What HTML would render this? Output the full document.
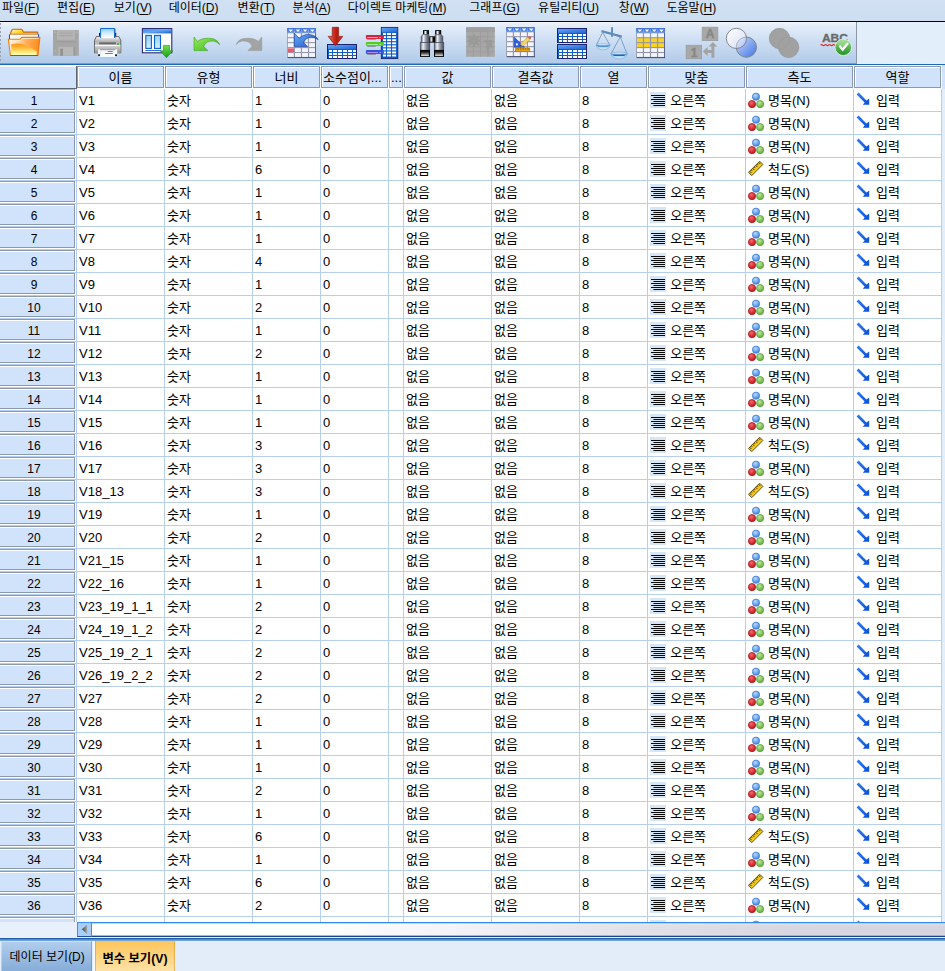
<!DOCTYPE html>
<html lang="ko"><head><meta charset="utf-8"><title>SPSS Variable View</title>
<style>
html,body{margin:0;padding:0}
html{width:945px;height:971px;overflow:hidden}
body{width:945px;height:971px;overflow:hidden;position:relative;background:#fff;font-family:"Liberation Sans","Noto Sans CJK KR",sans-serif;font-size:13px;color:#000}
#defs{position:absolute;width:0;height:0;overflow:hidden}
#menubar{position:absolute;left:0;top:0;width:945px;height:21px;background:linear-gradient(#d1e1f3,#cddef1)}
#menubar:after{content:"";position:absolute;left:0;top:21px;width:945px;height:1px;background:#000}
.mi{position:absolute;top:0;height:20px;line-height:17px;white-space:nowrap;font-size:12px}
.mi u{text-decoration:underline;text-underline-offset:2px}
#toolbar{position:absolute;left:0;top:22px;width:856px;height:41px;background:linear-gradient(#f6f9fe 0,#f6f9fe 1px,#e7effa 1.5px,#cbddf2 50%,#b2cbe9 100%);border-right:1px solid #8b97a6;border-bottom:1px solid #979797}
#grip{position:absolute;left:0;top:1.2px;width:1.4px;height:39px;background:repeating-linear-gradient(#98a2ae 0 1.6px,transparent 1.6px 4.05px)}
#tbright{position:absolute;left:857px;top:22px;width:88px;height:42px;background:#e3eefb}
#tbbot{position:absolute;left:0;top:63px;width:857px;height:1px;background:#979797}
#blueline{position:absolute;left:0;top:64px;width:945px;height:1px;background:#1d69b9}
#grid{position:absolute;left:0;top:0;width:945px;height:922px;overflow:hidden}
#lines{position:absolute;left:0;top:0}
.hc{position:absolute;top:67px;height:20px;line-height:21.2px;text-align:center;white-space:nowrap}
.hl{text-align:left;text-indent:1.5px}
.row{position:absolute;left:0;width:945px;height:23px;line-height:23px}
.rn{position:absolute;left:0;width:68px;text-align:center;top:0;line-height:26.6px;font-size:12px}
.c{position:absolute;top:0;white-space:nowrap;line-height:25px}
.ic{position:absolute;overflow:visible}
#hs{position:absolute;left:0;top:922px;width:945px;height:16px}
#hsleft{position:absolute;left:0;top:0;width:77px;height:16.2px;background:#e8f1fb}
#hstrack{position:absolute;left:92px;top:0;width:853px;height:12.8px;border-top:1.2px solid #2f8bf0;border-bottom:1.1px solid #1a4688;background:linear-gradient(rgba(255,255,255,.25),rgba(255,255,255,0) 30%,rgba(255,255,255,0) 80%,rgba(255,255,255,.2)),linear-gradient(90deg,#fff 0,#fff 26%,#f1f0f5 45%,#e3e2e9 62%,#d8d6e0 82%,#d6d4de 100%)}
#hstrack:before{content:"";position:absolute;left:0;top:0;width:100%;height:0.8px;background:#c9c2b8;opacity:.7}
#hstrack:after{content:"";position:absolute;left:0;bottom:0;width:100%;height:0.9px;background:#a9a29a;opacity:.8}
#hsbtn{position:absolute;left:77px;top:0;width:13.4px;height:12.8px;border:1.2px solid #3b8ff0;border-bottom:1.1px solid #1f4f9f;border-right-width:0.8px;background:#a9cef8}
#hsbtn svg{position:absolute;left:-1px;top:-1px}
#tabline{position:absolute;left:0;top:937px;width:945px;height:4.4px;background:linear-gradient(#e9f1fb 0,#e9f1fb 1.0px,#1d5cab 1.2px,#2263b2 2.3px,#6c9fd2 2.6px,#78a8d8 4.4px)}
#tabs{overflow:hidden;position:absolute;left:0;top:941.3px;width:945px;height:29.7px;background:#e3edfa}
#tab1{overflow:hidden;position:absolute;left:1.4px;top:0.2px;width:90.6px;height:30px;background:linear-gradient(#b2cfee,#86acd8);line-height:33.4px;text-align:center;white-space:nowrap;font-size:12px;text-indent:1px;box-shadow:inset 1px 1px 0 rgba(255,255,255,.35),inset -1px 0 0 rgba(90,125,175,.45)}
#tabgap{position:absolute;left:92.6px;top:0;width:2.3px;height:30px;background:#f4f8fd}
#tab2{overflow:hidden;position:absolute;left:95px;top:0.2px;width:80px;height:30px;background:linear-gradient(#fdc55a,#fee2a6);line-height:37.4px;text-align:center;white-space:nowrap;font-weight:bold;font-size:12.3px;box-shadow:inset 1px 0 0 rgba(214,150,40,.55),inset -1px 0 0 rgba(214,150,40,.55)}
</style></head>
<body>
<svg id="defs" width="0" height="0"><defs><linearGradient id="gHdr" x1="0" y1="0" x2="0" y2="1"><stop offset="0" stop-color="#2f66de"/><stop offset="1" stop-color="#5f98f0"/></linearGradient><linearGradient id="gHdr2" x1="0" y1="0" x2="1" y2="1"><stop offset="0" stop-color="#63a8f3"/><stop offset="1" stop-color="#1f62d6"/></linearGradient><linearGradient id="gFoldB" x1="0" y1="0" x2="0" y2="1"><stop offset="0" stop-color="#f6c21c"/><stop offset="1" stop-color="#fde98a"/></linearGradient><linearGradient id="gFoldF" x1="1" y1="0" x2="0.2" y2="1"><stop offset="0" stop-color="#fb8a0c"/><stop offset="0.45" stop-color="#fda52e"/><stop offset="1" stop-color="#ffe49a"/></linearGradient><linearGradient id="gFoldG" x1="0" y1="0" x2="0" y2="1"><stop offset="0" stop-color="#ffb03a"/><stop offset="0.7" stop-color="#ffd76a"/><stop offset="1" stop-color="#fff2b8"/></linearGradient><linearGradient id="gPap" x1="0" y1="0" x2="0" y2="1"><stop offset="0" stop-color="#5fb0f5"/><stop offset="1" stop-color="#f2faff"/></linearGradient><linearGradient id="gPrn" x1="0" y1="0" x2="0" y2="1"><stop offset="0" stop-color="#f4f4f4"/><stop offset="0.35" stop-color="#c9c9c9"/><stop offset="0.5" stop-color="#e6e6e6"/><stop offset="1" stop-color="#8e8e8e"/></linearGradient><linearGradient id="gCol" x1="0" y1="0" x2="0" y2="1"><stop offset="0" stop-color="#94cff4"/><stop offset="1" stop-color="#d6effc"/></linearGradient><linearGradient id="gGrn" x1="0" y1="0" x2="0" y2="1"><stop offset="0" stop-color="#6ee24a"/><stop offset="1" stop-color="#189a1c"/></linearGradient><linearGradient id="gUndo" x1="0" y1="0" x2="1" y2="1"><stop offset="0" stop-color="#9be85a"/><stop offset="1" stop-color="#3cb81e"/></linearGradient><linearGradient id="gBlueA" x1="0" y1="0" x2="1" y2="1"><stop offset="0" stop-color="#6ab0f6"/><stop offset="1" stop-color="#1a55cc"/></linearGradient><linearGradient id="gRed" x1="0" y1="0" x2="1" y2="0"><stop offset="0" stop-color="#ef6c5a"/><stop offset="0.45" stop-color="#c8281a"/><stop offset="0.58" stop-color="#b21c0e"/><stop offset="1" stop-color="#d23a2c"/></linearGradient><linearGradient id="gMetal" x1="0" y1="0" x2="1" y2="0"><stop offset="0" stop-color="#4f535f"/><stop offset="0.32" stop-color="#dfe2ea"/><stop offset="0.58" stop-color="#8f93a0"/><stop offset="1" stop-color="#3a3d48"/></linearGradient><linearGradient id="gLens" x1="0" y1="0" x2="0" y2="1"><stop offset="0" stop-color="#c9c9cf"/><stop offset="0.3" stop-color="#333"/><stop offset="1" stop-color="#000"/></linearGradient><linearGradient id="gC1" x1="0" y1="0" x2="1" y2="1"><stop offset="0" stop-color="#ffffff"/><stop offset="1" stop-color="#d6ddf6"/></linearGradient><linearGradient id="gC2" x1="0" y1="0" x2="1" y2="1"><stop offset="0" stop-color="#cfdcfa"/><stop offset="1" stop-color="#3f74e6"/></linearGradient><linearGradient id="gChk" x1="0" y1="0" x2="0" y2="1"><stop offset="0" stop-color="#8fd87a"/><stop offset="1" stop-color="#1f9222"/></linearGradient><linearGradient id="gPan" x1="0" y1="0" x2="0" y2="1"><stop offset="0" stop-color="#2c6fc4"/><stop offset="0.45" stop-color="#9fd2f2"/><stop offset="1" stop-color="#e4f3fc"/></linearGradient><radialGradient id="gBallB" cx="0.4" cy="0.3" r="0.7"><stop offset="0" stop-color="#b9dbfb"/><stop offset="1" stop-color="#3f86e0"/></radialGradient><radialGradient id="gBallR" cx="0.4" cy="0.3" r="0.7"><stop offset="0" stop-color="#f26a6a"/><stop offset="1" stop-color="#c4141c"/></radialGradient><radialGradient id="gBallG" cx="0.4" cy="0.3" r="0.7"><stop offset="0" stop-color="#bfe79a"/><stop offset="1" stop-color="#5fae3a"/></radialGradient><linearGradient id="gRole" x1="0" y1="0" x2="1" y2="1"><stop offset="0" stop-color="#2f7df0"/><stop offset="1" stop-color="#0a4fd8"/></linearGradient><linearGradient id="gHdr3" x1="0" y1="0" x2="1" y2="1"><stop offset="0" stop-color="#3a84e8"/><stop offset="0.45" stop-color="#62a8f4"/><stop offset="1" stop-color="#1c5cd2"/></linearGradient><linearGradient id="gFB2" x1="0" y1="0" x2="1" y2="0.4"><stop offset="0" stop-color="#fffdf0"/><stop offset="0.3" stop-color="#ffe45a"/><stop offset="0.55" stop-color="#ffcf08"/><stop offset="1" stop-color="#ffd93a"/></linearGradient><linearGradient id="gFU" x1="0" y1="0" x2="1" y2="0"><stop offset="0" stop-color="#fff6ea"/><stop offset="0.22" stop-color="#ffe2c0"/><stop offset="0.6" stop-color="#ffac52"/><stop offset="1" stop-color="#ff8a1c"/></linearGradient><linearGradient id="gFL" x1="0" y1="0" x2="0" y2="1"><stop offset="0" stop-color="#ff9418"/><stop offset="0.4" stop-color="#ffbc3a"/><stop offset="0.78" stop-color="#ffee84"/><stop offset="1" stop-color="#ffffb4"/></linearGradient><linearGradient id="gPp" x1="0" y1="0" x2="1" y2="1"><stop offset="0" stop-color="#ffffff"/><stop offset="0.5" stop-color="#eef9ff"/><stop offset="1" stop-color="#b4e4fa"/></linearGradient><linearGradient id="gPrT" x1="0" y1="0" x2="0" y2="1"><stop offset="0" stop-color="#f6f6f6"/><stop offset="0.3" stop-color="#b4b4b4"/><stop offset="0.75" stop-color="#dcdcdc"/><stop offset="1" stop-color="#f2f2f2"/></linearGradient><linearGradient id="gPrL" x1="0" y1="0" x2="0" y2="1"><stop offset="0" stop-color="#d2d2d2"/><stop offset="1" stop-color="#969696"/></linearGradient><linearGradient id="gPap2" x1="0" y1="0" x2="0" y2="1"><stop offset="0" stop-color="#8ccdf8"/><stop offset="0.5" stop-color="#d2edfd"/><stop offset="1" stop-color="#ffffff"/></linearGradient><linearGradient id="gOut" x1="0" y1="0" x2="0" y2="1"><stop offset="0" stop-color="#8a8f96"/><stop offset="0.18" stop-color="#eef4fa"/><stop offset="0.8" stop-color="#ffffff"/><stop offset="1" stop-color="#cfe6f8"/></linearGradient><linearGradient id="gCap" x1="0" y1="0" x2="0" y2="1"><stop offset="0" stop-color="#050505"/><stop offset="0.35" stop-color="#3a3a3a"/><stop offset="1" stop-color="#e2e2e2"/></linearGradient><linearGradient id="gEye" x1="0" y1="0" x2="1" y2="0"><stop offset="0" stop-color="#8a8a8a"/><stop offset="0.4" stop-color="#f4f4f4"/><stop offset="1" stop-color="#2a2a2a"/></linearGradient><linearGradient id="gMetal2" x1="0" y1="0" x2="1" y2="0"><stop offset="0" stop-color="#5d6370"/><stop offset="0.3" stop-color="#eef0f5"/><stop offset="0.62" stop-color="#8d95a6"/><stop offset="1" stop-color="#4a4f5e"/></linearGradient><clipPath id="cpVenn"><circle cx="746.4" cy="47.2" r="10.6"/></clipPath><g id="i-align"><rect x="0" y="0" width="16" height="16" fill="#d5e6f6"/><rect x="1.0" y="3" width="14.0" height="1" fill="#0a0a0a"/><rect x="3.4" y="5" width="11.6" height="1" fill="#0a0a0a"/><rect x="1.0" y="7" width="14.0" height="1" fill="#0a0a0a"/><rect x="3.4" y="9" width="11.6" height="1" fill="#0a0a0a"/><rect x="1.0" y="11" width="14.0" height="1" fill="#0a0a0a"/><rect x="3.4" y="13" width="11.6" height="1" fill="#0a0a0a"/></g><g id="i-nominal"><circle cx="8" cy="4.7" r="3.6" fill="url(#gBallB)" stroke="#3c7bd0" stroke-width="0.8"/><circle cx="4" cy="12.1" r="3.6" fill="url(#gBallR)" stroke="#b0141c" stroke-width="0.8"/><circle cx="12.1" cy="12.1" r="3.6" fill="url(#gBallG)" stroke="#5c9c3c" stroke-width="0.8"/></g><g id="i-scale"><g transform="translate(7.7,7.4) rotate(-45)"><rect x="-7.9" y="-2.3" width="15.8" height="4.6" fill="#f5c81c" stroke="#5a4810" stroke-width="0.9"/><rect x="-6.6" y="-2.3" width="0.7" height="2.6" fill="#4a3a08"/><rect x="-4.5" y="-2.3" width="0.7" height="1.7" fill="#4a3a08"/><rect x="-2.4" y="-2.3" width="0.7" height="2.6" fill="#4a3a08"/><rect x="-0.3" y="-2.3" width="0.7" height="1.7" fill="#4a3a08"/><rect x="1.8" y="-2.3" width="0.7" height="2.6" fill="#4a3a08"/><rect x="3.9" y="-2.3" width="0.7" height="1.7" fill="#4a3a08"/><rect x="6.0" y="-2.3" width="0.7" height="2.6" fill="#4a3a08"/></g></g><g id="i-role"><path d="M0.6 2.6 L2.6 0.6 L10.4 8.4 L13.2 6.4 L13.2 12.8 L6.8 12.8 L8.6 10.4z" fill="url(#gRole)"/></g></defs></svg>
<div id="menubar">
<div class="mi" style="left:1.9px">파일<span>(<u>F</u>)</span></div>
<div class="mi" style="left:56.9px">편집<span>(<u>E</u>)</span></div>
<div class="mi" style="left:113.8px">보기<span>(<u>V</u>)</span></div>
<div class="mi" style="left:168.7px">데이터<span>(<u>D</u>)</span></div>
<div class="mi" style="left:237.6px">변환<span>(<u>T</u>)</span></div>
<div class="mi" style="left:292.6px">분석<span>(<u>A</u>)</span></div>
<div class="mi" style="left:347.8px">다이렉트 마케팅<span>(<u>M</u>)</span></div>
<div class="mi" style="left:469.3px">그래프<span>(<u>G</u>)</span></div>
<div class="mi" style="left:538.1px">유틸리티<span>(<u>U</u>)</span></div>
<div class="mi" style="left:618.7px">창<span>(<u>W</u>)</span></div>
<div class="mi" style="left:666.4px">도움말<span>(<u>H</u>)</span></div>
</div>
<div id="toolbar"><div id="grip"></div><svg id="tbicons" width="857" height="42" viewBox="0 22 857 42"><g><path d="M10.6 34.4 L10.6 33 L12.2 29.6 Q12.4 29.2 13 29.2 H21.4 Q22 29.2 22.2 29.7 L23.4 32.1 H37.2 Q37.8 32.1 37.8 32.7 V34.4z" fill="url(#gFB2)" stroke="#c46414" stroke-width="1.1" stroke-linejoin="round"/><path d="M9.5 39.6 V34.6 H38.6 V39.6z" fill="url(#gPp)"/><path d="M9.5 39.8 V34.2 M38.5 34.2 V38" fill="none" stroke="#1a5ad8" stroke-width="1.1"/><path d="M8.4 39.3 H20 L21.6 37.4 H39.9 L37.9 55.5 H10.4z" fill="url(#gFU)" stroke="#f07a08" stroke-width="1.1" stroke-linejoin="round"/><path d="M11 44.6 Q17.4 42.4 23.6 44.6 Q31.6 47.4 36.9 51.6 L36.5 54.9 H12z" fill="url(#gFL)"/><path d="M9.6 40.4 H20.4 L22 38.5 H38.6" fill="none" stroke="#fff3cf" stroke-width="0.8" opacity="0.9"/><path d="M10.5 55.5 H37.8" stroke="#a04a04" stroke-width="1" opacity="0.85"/></g><g><rect x="53" y="30.1" width="25.8" height="25.7" fill="#a6a6a6"/><rect x="57" y="30.1" width="18" height="9.8" fill="#b4b4b4"/><rect x="59.5" y="32.6" width="13" height="0.9" fill="#a2a2a2"/><rect x="59.5" y="35.3" width="13" height="0.9" fill="#a2a2a2"/><rect x="56.6" y="41.2" width="18.8" height="1.1" fill="#9b9b9b"/><rect x="58.4" y="46.8" width="15.2" height="9" fill="#b7b7b7"/><rect x="60.2" y="48.6" width="2.8" height="7.2" fill="#929292"/><rect x="73.6" y="46.8" width="1.6" height="9" fill="#999"/><rect x="54.4" y="31.6" width="1.2" height="1.2" fill="#bcbcbc"/><rect x="76.2" y="31.6" width="1.2" height="1.2" fill="#bcbcbc"/><rect x="54.4" y="50.2" width="1.2" height="1.2" fill="#bcbcbc"/></g><g><rect x="99" y="32.9" width="1.2" height="3" fill="#111"/><rect x="115" y="32.9" width="1.2" height="3" fill="#111"/><path d="M94.5 52.8 V40.4 L96.4 36.5 H118.8 L120.8 40.4 V52.8z" fill="url(#gPrT)" stroke="#4a4a4a" stroke-width="0.8" stroke-linejoin="round"/><rect x="94.9" y="46" width="25.5" height="6.7" fill="url(#gPrL)"/><rect x="94.9" y="45" width="25.5" height="1" fill="#fbfbfb"/><rect x="99.2" y="42.2" width="16.8" height="2.1" fill="#6a6a6a"/><rect x="99.2" y="42.2" width="16.8" height="0.7" fill="#8a8a8a"/><rect x="117" y="43" width="2.1" height="2" fill="#43c63e"/><path d="M100.6 38 V28.5 H114.7 V38z" fill="url(#gPap2)"/><path d="M100.6 38 V28.5 H114.7 V38" fill="none" stroke="#0f6bd8" stroke-width="1"/><rect x="114.4" y="29" width="0.9" height="9" fill="#0a58c0"/><rect x="98" y="49.4" width="2.2" height="5.2" fill="#f8f8f8"/><rect x="115" y="49.4" width="2.2" height="5.2" fill="#f8f8f8"/><rect x="98.1" y="54.4" width="1.9" height="1.5" fill="#0c0c0c"/><rect x="115.1" y="54.4" width="1.9" height="1.5" fill="#0c0c0c"/><path d="M100.2 49.2 H115 V57.8 H100.2z" fill="url(#gOut)"/><path d="M100.2 57.8 H115" stroke="#7fb6e6" stroke-width="0.7"/><rect x="107.8" y="51" width="5" height="0.9" fill="#6e747c"/><rect x="105.1" y="53" width="7.7" height="0.9" fill="#6e747c"/></g><g><rect x="142.4" y="28.6" width="29.4" height="24.2" fill="#fff" stroke="#1f2168" stroke-width="1.05"/><rect x="142.9" y="29.1" width="28.4" height="4.3" fill="url(#gHdr3)"/><rect x="145.8" y="35.4" width="5.6" height="13" fill="url(#gCol)" stroke="#0c62d8" stroke-width="1.1"/><rect x="154.5" y="35.4" width="6" height="13" fill="url(#gCol)" stroke="#0c62d8" stroke-width="1.1"/><rect x="145.3" y="50" width="15.6" height="0.9" fill="#1763d6"/><path d="M163.4 45.4 H169.6 V50.8 H172.8 L166.5 57.8 L160.2 50.8 H163.4z" fill="url(#gGrn)" stroke="#1c8a1c" stroke-width="0.6"/></g><g transform="translate(194.00,37)"><path d="M0 0 L0 13.6 L13.9 13.6 L9.7 9.5 Q10.6 6.4 13.4 5 Q16.4 3.7 19.6 4.1 Q23 4.8 25.8 7.6 Q23.6 3 19.4 1.8 Q14.6 0.8 10 1.5 Q6 2.4 3.4 4.4z" fill="url(#gUndo)" stroke="#37a51e" stroke-width="0.6"/></g><g transform="translate(261.80,37) scale(-1,1)"><path d="M0 0 L0 13.6 L13.9 13.6 L9.7 9.5 Q10.6 6.4 13.4 5 Q16.4 3.7 19.6 4.1 Q23 4.8 25.8 7.6 Q23.6 3 19.4 1.8 Q14.6 0.8 10 1.5 Q6 2.4 3.4 4.4z" fill="#a3a3a3" stroke="#9c9c9c" stroke-width="0.6"/></g><g><rect x="287.10" y="28.20" width="28.90" height="29.50" fill="#969aac"/><rect x="287.10" y="28.20" width="28.90" height="4.40" fill="url(#gHdr)"/><path d="M288.41 29.60 h4.6 l-2.3 2.5z" fill="#fff"/><path d="M295.64 29.60 h4.6 l-2.3 2.5z" fill="#fff"/><rect x="294.03" y="29.20" width="0.6" height="3.40" fill="#9cc0f6" opacity="0.8"/><path d="M302.86 29.60 h4.6 l-2.3 2.5z" fill="#fff"/><rect x="301.25" y="29.20" width="0.6" height="3.40" fill="#9cc0f6" opacity="0.8"/><path d="M310.09 29.60 h4.6 l-2.3 2.5z" fill="#fff"/><rect x="308.47" y="29.20" width="0.6" height="3.40" fill="#9cc0f6" opacity="0.8"/><rect x="287.90" y="33.30" width="5.87" height="3.84" fill="#f4f5fc"/><rect x="294.98" y="33.30" width="5.87" height="3.84" fill="#f4f5fc"/><rect x="302.05" y="33.30" width="5.87" height="3.84" fill="#f4f5fc"/><rect x="309.12" y="33.30" width="5.87" height="3.84" fill="#f4f5fc"/><rect x="287.90" y="38.24" width="5.87" height="3.84" fill="#f4f5fc"/><rect x="294.98" y="38.24" width="5.87" height="3.84" fill="#f4f5fc"/><rect x="302.05" y="38.24" width="5.87" height="3.84" fill="#f4f5fc"/><rect x="309.12" y="38.24" width="5.87" height="3.84" fill="#f4f5fc"/><rect x="287.90" y="43.18" width="5.87" height="3.84" fill="#f4f5fc"/><rect x="294.98" y="43.18" width="5.87" height="3.84" fill="#f4f5fc"/><rect x="302.05" y="43.18" width="5.87" height="3.84" fill="#f4f5fc"/><rect x="309.12" y="43.18" width="5.87" height="3.84" fill="#f4f5fc"/><rect x="287.90" y="48.12" width="5.87" height="3.84" fill="#f4f5fc"/><rect x="294.98" y="48.12" width="5.87" height="3.84" fill="#f4f5fc"/><rect x="302.05" y="48.12" width="5.87" height="3.84" fill="#f4f5fc"/><rect x="309.12" y="48.12" width="5.87" height="3.84" fill="#f4f5fc"/><rect x="287.90" y="53.06" width="5.87" height="3.84" fill="#f4f5fc"/><rect x="294.98" y="53.06" width="5.87" height="3.84" fill="#f4f5fc"/><rect x="302.05" y="53.06" width="5.87" height="3.84" fill="#f4f5fc"/><rect x="309.12" y="53.06" width="5.87" height="3.84" fill="#f4f5fc"/><rect x="315.10" y="32.60" width="0.9" height="25.50" fill="#56608a"/><rect x="287.70" y="57.20" width="28.30" height="0.9" fill="#3a4468"/><rect x="288" y="48.4" width="5.9" height="3.8" fill="#f0566a"/><g transform="translate(294.3,33.4) scale(0.96,0.97)"><path d="M0 0 L0 13.6 L13.9 13.6 L9.6 9.6 Q12.4 3.8 17.6 3.8 Q22 4 24.8 6.4 Q22.4 1.8 15.4 1.2 Q9 0.9 5.2 5z" fill="url(#gBlueA)" stroke="#1a3a9c" stroke-width="0.7"/></g></g><g><g shape-rendering="crispEdges"><rect x="327" y="44" width="30" height="15" fill="#1c2270"/><rect x="328" y="45" width="28" height="13" fill="#0f5ec8"/><rect x="328" y="45" width="28" height="4" fill="url(#gHdr2)"/><rect x="329" y="50" width="3" height="2" fill="#fff"/><rect x="333" y="50" width="4" height="2" fill="#fff"/><rect x="338" y="50" width="4" height="2" fill="#fff"/><rect x="343" y="50" width="4" height="2" fill="#fff"/><rect x="348" y="50" width="4" height="2" fill="#fff"/><rect x="353" y="50" width="3" height="2" fill="#fff"/><rect x="329" y="53" width="3" height="2" fill="#fff"/><rect x="333" y="53" width="4" height="2" fill="#fff"/><rect x="338" y="53" width="4" height="2" fill="#fff"/><rect x="343" y="53" width="4" height="2" fill="#fff"/><rect x="348" y="53" width="4" height="2" fill="#fff"/><rect x="353" y="53" width="3" height="2" fill="#fff"/><rect x="329" y="56" width="3" height="2" fill="#fff"/><rect x="333" y="56" width="4" height="2" fill="#fff"/><rect x="338" y="56" width="4" height="2" fill="#fff"/><rect x="343" y="56" width="4" height="2" fill="#fff"/><rect x="348" y="56" width="4" height="2" fill="#fff"/><rect x="353" y="56" width="3" height="2" fill="#fff"/></g><path d="M332.3 27.3 H338.6 V36.4 H342.8 L335.5 45.8 L328.2 36.4 H332.3z" fill="url(#gRed)" stroke="#8a1a10" stroke-width="0.7"/></g><g><rect x="381.30" y="27.40" width="16.50" height="31.20" fill="#0f5ec8" stroke="#1c2270" stroke-width="0.9"/><rect x="381.80" y="27.90" width="15.50" height="4.5" fill="url(#gHdr2)"/><rect x="383.00" y="33.10" width="3.00" height="1.9" fill="#fff"/><rect x="387.00" y="33.10" width="4.00" height="1.9" fill="#fff"/><rect x="392.10" y="33.10" width="4.00" height="1.9" fill="#fff"/><rect x="383.00" y="36.17" width="3.00" height="1.9" fill="#fff"/><rect x="387.00" y="36.17" width="4.00" height="1.9" fill="#fff"/><rect x="392.10" y="36.17" width="4.00" height="1.9" fill="#fff"/><rect x="383.00" y="39.24" width="3.00" height="1.9" fill="#fff"/><rect x="387.00" y="39.24" width="4.00" height="1.9" fill="#fff"/><rect x="392.10" y="39.24" width="4.00" height="1.9" fill="#fff"/><rect x="383.00" y="42.31" width="3.00" height="1.9" fill="#fff"/><rect x="387.00" y="42.31" width="4.00" height="1.9" fill="#fff"/><rect x="392.10" y="42.31" width="4.00" height="1.9" fill="#fff"/><rect x="383.00" y="45.38" width="3.00" height="1.9" fill="#fff"/><rect x="387.00" y="45.38" width="4.00" height="1.9" fill="#fff"/><rect x="392.10" y="45.38" width="4.00" height="1.9" fill="#fff"/><rect x="383.00" y="48.45" width="3.00" height="1.9" fill="#fff"/><rect x="387.00" y="48.45" width="4.00" height="1.9" fill="#fff"/><rect x="392.10" y="48.45" width="4.00" height="1.9" fill="#fff"/><rect x="383.00" y="51.52" width="3.00" height="1.9" fill="#fff"/><rect x="387.00" y="51.52" width="4.00" height="1.9" fill="#fff"/><rect x="392.10" y="51.52" width="4.00" height="1.9" fill="#fff"/><rect x="383.00" y="54.59" width="3.00" height="1.9" fill="#fff"/><rect x="387.00" y="54.59" width="4.00" height="1.9" fill="#fff"/><rect x="392.10" y="54.59" width="4.00" height="1.9" fill="#fff"/><rect x="367.2" y="38.85" width="8.6" height="0.7" fill="#3a3a3a" opacity="0.75"/><rect x="365.9" y="35.10" width="18" height="3.8" rx="0.8" fill="#d8203e"/><rect x="367.2" y="37.10" width="10.8" height="0.95" fill="#ffc48a"/><rect x="379.2" y="37.10" width="1.8" height="0.95" fill="#ffc48a"/><rect x="367.2" y="45.85" width="8.6" height="0.7" fill="#3a3a3a" opacity="0.75"/><rect x="365.9" y="42.10" width="18" height="3.8" rx="0.8" fill="#58c828"/><rect x="367.2" y="44.10" width="10.8" height="0.95" fill="#a6f2a0"/><rect x="379.2" y="44.10" width="1.8" height="0.95" fill="#a6f2a0"/><rect x="367.2" y="53.85" width="8.6" height="0.7" fill="#3a3a3a" opacity="0.75"/><rect x="365.9" y="50.10" width="18" height="3.8" rx="0.8" fill="#2f56d8"/><rect x="367.2" y="52.10" width="10.8" height="0.95" fill="#c48cff"/><rect x="379.2" y="52.10" width="1.8" height="0.95" fill="#c48cff"/></g><g><rect x="423.00" y="30.1" width="6.00" height="4.2" fill="#0c0c0c"/><rect x="424.10" y="31" width="3.40" height="3.3" fill="url(#gEye)"/><path d="M421.20 36.4 L422.70 34.6 H428.90 V42.5 H421.20z" fill="url(#gMetal2)" stroke="#3c404e" stroke-width="0.6"/><rect x="420.20" y="42.6" width="9.60" height="7.6" fill="url(#gMetal2)" stroke="#3c404e" stroke-width="0.6"/><rect x="420.00" y="50" width="10.00" height="6.9" fill="#050505"/><rect x="421.10" y="51" width="7.80" height="5" fill="url(#gCap)"/><rect x="435.10" y="30.1" width="6.10" height="4.2" fill="#0c0c0c"/><rect x="436.20" y="31" width="3.50" height="3.3" fill="url(#gEye)"/><path d="M435.10 34.6 H441.30 L442.80 36.4 V42.5 H435.10z" fill="url(#gMetal2)" stroke="#3c404e" stroke-width="0.6"/><rect x="434.20" y="42.6" width="9.60" height="7.6" fill="url(#gMetal2)" stroke="#3c404e" stroke-width="0.6"/><rect x="434.00" y="50" width="10.00" height="6.9" fill="#050505"/><rect x="435.10" y="51" width="7.80" height="5" fill="url(#gCap)"/><rect x="429.2" y="36.3" width="5.9" height="6.3" fill="#0a0a0a"/><rect x="430.1" y="37.1" width="3" height="4.6" fill="url(#gEye)"/></g><g><rect x="466.1" y="27.2" width="28.7" height="29.6" fill="#a7a7a7"/><rect x="472.87" y="31.6" width="0.9" height="25.2" fill="#9d9d9d"/><rect x="480.04" y="31.6" width="0.9" height="25.2" fill="#9d9d9d"/><rect x="487.21" y="31.6" width="0.9" height="25.2" fill="#9d9d9d"/><rect x="466.1" y="31.20" width="28.7" height="0.9" fill="#9d9d9d"/><rect x="466.1" y="36.24" width="28.7" height="0.9" fill="#9d9d9d"/><rect x="466.1" y="41.28" width="28.7" height="0.9" fill="#9d9d9d"/><rect x="466.1" y="46.32" width="28.7" height="0.9" fill="#9d9d9d"/><rect x="466.1" y="51.36" width="28.7" height="0.9" fill="#9d9d9d"/><rect x="466.1" y="27.2" width="28.7" height="4.2" fill="#a0a0a0"/><path d="M469 36.5 L479 45 M479 36.5 L469 45 M474 34.5 V47 M468 40.8 H480" stroke="#9a9a9a" stroke-width="2.6" fill="none"/><path d="M483.5 40 H492 V48.5 L489.6 46.4 Q488 51 489.4 56.6 Q485.4 51 486.6 44 z" fill="#9a9a9a"/></g><g><rect x="506.20" y="27.20" width="28.60" height="29.60" fill="#9296a6"/><rect x="506.20" y="27.20" width="28.60" height="4.40" fill="url(#gHdr)"/><path d="M507.47 28.60 h4.6 l-2.3 2.5z" fill="#fff"/><path d="M514.62 28.60 h4.6 l-2.3 2.5z" fill="#fff"/><rect x="513.05" y="28.20" width="0.6" height="3.40" fill="#9cc0f6" opacity="0.8"/><path d="M521.77 28.60 h4.6 l-2.3 2.5z" fill="#fff"/><rect x="520.20" y="28.20" width="0.6" height="3.40" fill="#9cc0f6" opacity="0.8"/><path d="M528.92 28.60 h4.6 l-2.3 2.5z" fill="#fff"/><rect x="527.35" y="28.20" width="0.6" height="3.40" fill="#9cc0f6" opacity="0.8"/><rect x="507.00" y="32.30" width="5.80" height="3.86" fill="#f4f5fc"/><rect x="514.00" y="32.30" width="5.80" height="3.86" fill="#f4f5fc"/><rect x="521.00" y="32.30" width="5.80" height="3.86" fill="#f4f5fc"/><rect x="528.00" y="32.30" width="5.80" height="3.86" fill="#f4f5fc"/><rect x="507.00" y="37.26" width="5.80" height="3.86" fill="#f4f5fc"/><rect x="514.00" y="37.26" width="5.80" height="3.86" fill="#f4f5fc"/><rect x="521.00" y="37.26" width="5.80" height="3.86" fill="#f4f5fc"/><rect x="528.00" y="37.26" width="5.80" height="3.86" fill="#f4f5fc"/><rect x="507.00" y="42.22" width="5.80" height="3.86" fill="#f4f5fc"/><rect x="514.00" y="42.22" width="5.80" height="3.86" fill="#f4f5fc"/><rect x="521.00" y="42.22" width="5.80" height="3.86" fill="#f4f5fc"/><rect x="528.00" y="42.22" width="5.80" height="3.86" fill="#f4f5fc"/><rect x="507.00" y="47.18" width="5.80" height="3.86" fill="#f4f5fc"/><rect x="514.00" y="47.18" width="5.80" height="3.86" fill="#f4f5fc"/><rect x="521.00" y="47.18" width="5.80" height="3.86" fill="#f4f5fc"/><rect x="528.00" y="47.18" width="5.80" height="3.86" fill="#f4f5fc"/><rect x="507.00" y="52.14" width="5.80" height="3.86" fill="#f4f5fc"/><rect x="514.00" y="52.14" width="5.80" height="3.86" fill="#f4f5fc"/><rect x="521.00" y="52.14" width="5.80" height="3.86" fill="#f4f5fc"/><rect x="528.00" y="52.14" width="5.80" height="3.86" fill="#f4f5fc"/><rect x="533.90" y="31.60" width="0.9" height="25.60" fill="#56608a"/><rect x="506.80" y="56.30" width="28.00" height="0.9" fill="#3a4468"/><path d="M514.2 37 V47.3 H524.6z" fill="#2d5ee2" stroke="#1b3fb0" stroke-width="0.6"/><circle cx="516.9" cy="44.4" r="1.1" fill="#fff"/><path d="M520.2 46.3 L521 43.4 L527.6 37.2 L530 39.6 L523.4 45.8z" fill="#f2d565" stroke="#a88a30" stroke-width="0.5"/><path d="M527.6 37.2 L528.8 36.2 Q530 35.6 531 36.8 Q531.8 38 530.9 38.8 L530 39.6z" fill="#d4675a"/><path d="M520.2 46.3 L520.6 44.8 L521.8 45.9z" fill="#111"/><rect x="515.3" y="48" width="14.5" height="3.7" fill="#e6a41e" stroke="#a9740c" stroke-width="0.6"/><rect x="516.60" y="48.3" width="0.6" height="1.6" fill="#8a5c08"/><rect x="518.30" y="48.3" width="0.6" height="1.6" fill="#8a5c08"/><rect x="520.00" y="48.3" width="0.6" height="1.6" fill="#8a5c08"/><rect x="521.70" y="48.3" width="0.6" height="1.6" fill="#8a5c08"/><rect x="523.40" y="48.3" width="0.6" height="1.6" fill="#8a5c08"/><rect x="525.10" y="48.3" width="0.6" height="1.6" fill="#8a5c08"/><rect x="526.80" y="48.3" width="0.6" height="1.6" fill="#8a5c08"/><rect x="528.50" y="48.3" width="0.6" height="1.6" fill="#8a5c08"/></g><g><g shape-rendering="crispEdges"><rect x="557" y="28" width="30" height="15" fill="#1c2270"/><rect x="558" y="29" width="28" height="13" fill="#0f5ec8"/><rect x="558" y="29" width="28" height="4" fill="url(#gHdr2)"/><rect x="559" y="34" width="3" height="2" fill="#fff"/><rect x="563" y="34" width="4" height="2" fill="#fff"/><rect x="568" y="34" width="4" height="2" fill="#fff"/><rect x="573" y="34" width="4" height="2" fill="#fff"/><rect x="578" y="34" width="4" height="2" fill="#fff"/><rect x="583" y="34" width="3" height="2" fill="#fff"/><rect x="559" y="37" width="3" height="2" fill="#fff"/><rect x="563" y="37" width="4" height="2" fill="#fff"/><rect x="568" y="37" width="4" height="2" fill="#fff"/><rect x="573" y="37" width="4" height="2" fill="#fff"/><rect x="578" y="37" width="4" height="2" fill="#fff"/><rect x="583" y="37" width="3" height="2" fill="#fff"/><rect x="559" y="40" width="3" height="2" fill="#fff"/><rect x="563" y="40" width="4" height="2" fill="#fff"/><rect x="568" y="40" width="4" height="2" fill="#fff"/><rect x="573" y="40" width="4" height="2" fill="#fff"/><rect x="578" y="40" width="4" height="2" fill="#fff"/><rect x="583" y="40" width="3" height="2" fill="#fff"/></g><g shape-rendering="crispEdges"><rect x="557" y="44" width="30" height="15" fill="#1c2270"/><rect x="558" y="45" width="28" height="13" fill="#0f5ec8"/><rect x="558" y="45" width="28" height="4" fill="url(#gHdr2)"/><rect x="559" y="50" width="3" height="2" fill="#fff"/><rect x="563" y="50" width="4" height="2" fill="#fff"/><rect x="568" y="50" width="4" height="2" fill="#fff"/><rect x="573" y="50" width="4" height="2" fill="#fff"/><rect x="578" y="50" width="4" height="2" fill="#fff"/><rect x="583" y="50" width="3" height="2" fill="#fff"/><rect x="559" y="53" width="3" height="2" fill="#fff"/><rect x="563" y="53" width="4" height="2" fill="#fff"/><rect x="568" y="53" width="4" height="2" fill="#fff"/><rect x="573" y="53" width="4" height="2" fill="#fff"/><rect x="578" y="53" width="4" height="2" fill="#fff"/><rect x="583" y="53" width="3" height="2" fill="#fff"/><rect x="559" y="56" width="3" height="2" fill="#fff"/><rect x="563" y="56" width="4" height="2" fill="#fff"/><rect x="568" y="56" width="4" height="2" fill="#fff"/><rect x="573" y="56" width="4" height="2" fill="#fff"/><rect x="578" y="56" width="4" height="2" fill="#fff"/><rect x="583" y="56" width="3" height="2" fill="#fff"/></g></g><g><path d="M596.6 44.6 L602.6 32.4 L609.6 44.6" fill="none" stroke="#5d86b4" stroke-width="0.7"/><path d="M611.4 53.2 L620.2 36.8 L626.8 53.2" fill="none" stroke="#5d86b4" stroke-width="0.7"/><path d="M601.6 30 L622 35.6 L621.6 37.8 L601.2 32.2z" fill="#5f8cba"/><rect x="611.1" y="27.2" width="1.9" height="9.6" fill="#5f8cba"/><path d="M596 44.6 H610.2 Q609.6 49.8 603.1 49.8 Q596.6 49.8 596 44.6z" fill="url(#gPan)" stroke="#6a9ccc" stroke-width="0.5"/><path d="M610.8 53.2 H627.4 Q626.6 58.8 619.1 58.8 Q611.6 58.8 610.8 53.2z" fill="url(#gPan)" stroke="#6a9ccc" stroke-width="0.5"/><rect x="613.4" y="54.6" width="11.4" height="1.2" rx="0.6" fill="#123f9a"/><rect x="598" y="45.5" width="10.2" height="1" rx="0.5" fill="#2667bd"/><ellipse cx="603.1" cy="44.6" rx="7" ry="0.9" fill="#cfe8f8" stroke="#6a9ccc" stroke-width="0.4"/><ellipse cx="619.1" cy="53.2" rx="8.2" ry="1" fill="#cfe8f8" stroke="#6a9ccc" stroke-width="0.4"/></g><g><rect x="636.20" y="28.20" width="28.80" height="29.50" fill="#9296a6"/><rect x="636.20" y="28.20" width="28.80" height="4.40" fill="url(#gHdr)"/><path d="M637.50 29.60 h4.6 l-2.3 2.5z" fill="#fff"/><path d="M644.70 29.60 h4.6 l-2.3 2.5z" fill="#fff"/><rect x="643.10" y="29.20" width="0.6" height="3.40" fill="#9cc0f6" opacity="0.8"/><path d="M651.90 29.60 h4.6 l-2.3 2.5z" fill="#fff"/><rect x="650.30" y="29.20" width="0.6" height="3.40" fill="#9cc0f6" opacity="0.8"/><path d="M659.10 29.60 h4.6 l-2.3 2.5z" fill="#fff"/><rect x="657.50" y="29.20" width="0.6" height="3.40" fill="#9cc0f6" opacity="0.8"/><rect x="637.00" y="33.30" width="5.85" height="3.84" fill="#f4f5fc"/><rect x="644.05" y="33.30" width="5.85" height="3.84" fill="#f4f5fc"/><rect x="651.10" y="33.30" width="5.85" height="3.84" fill="#f4f5fc"/><rect x="658.15" y="33.30" width="5.85" height="3.84" fill="#f4f5fc"/><rect x="637.00" y="38.24" width="5.85" height="3.84" fill="#f9d324"/><rect x="644.05" y="38.24" width="5.85" height="3.84" fill="#f9d324"/><rect x="651.10" y="38.24" width="5.85" height="3.84" fill="#f9d324"/><rect x="658.15" y="38.24" width="5.85" height="3.84" fill="#f9d324"/><rect x="637.00" y="43.18" width="5.85" height="3.84" fill="#f9d324"/><rect x="644.05" y="43.18" width="5.85" height="3.84" fill="#f9d324"/><rect x="651.10" y="43.18" width="5.85" height="3.84" fill="#f9d324"/><rect x="658.15" y="43.18" width="5.85" height="3.84" fill="#f9d324"/><rect x="637.00" y="48.12" width="5.85" height="3.84" fill="#f4f5fc"/><rect x="644.05" y="48.12" width="5.85" height="3.84" fill="#f4f5fc"/><rect x="651.10" y="48.12" width="5.85" height="3.84" fill="#f4f5fc"/><rect x="658.15" y="48.12" width="5.85" height="3.84" fill="#f4f5fc"/><rect x="637.00" y="53.06" width="5.85" height="3.84" fill="#f4f5fc"/><rect x="644.05" y="53.06" width="5.85" height="3.84" fill="#f4f5fc"/><rect x="651.10" y="53.06" width="5.85" height="3.84" fill="#f4f5fc"/><rect x="658.15" y="53.06" width="5.85" height="3.84" fill="#f4f5fc"/><rect x="664.10" y="32.60" width="0.9" height="25.50" fill="#56608a"/><rect x="636.80" y="57.20" width="28.20" height="0.9" fill="#3a4468"/></g><g><rect x="702.2" y="27.2" width="15.6" height="13.4" fill="#a8a8a8" stroke="#9c9c9c" stroke-width="0.8"/><text x="710" y="38.4" font-family="Liberation Sans, sans-serif" font-weight="bold" font-size="12" fill="#878787" stroke="#878787" stroke-width="0.35" text-anchor="middle">A</text><rect x="686.2" y="45.3" width="15.4" height="13.4" fill="#a8a8a8" stroke="#9c9c9c" stroke-width="0.8"/><text x="694" y="56.6" font-family="Liberation Sans, sans-serif" font-weight="bold" font-size="12" fill="#878787" stroke="#878787" stroke-width="0.35" text-anchor="middle">1</text><path d="M712.9 42 L717.2 46.4 H714.4 V57.7 H711.4 V53 H707.6 V56.2 L702.9 51.5 L707.6 46.8 V50 H711.4 V46.4 H708.6z" fill="#a3a3a3"/></g><g><circle cx="736.4" cy="38.4" r="10.1" fill="url(#gC1)" stroke="#7c7c80" stroke-width="0.9"/><circle cx="746.4" cy="47.2" r="10.1" fill="url(#gC2)" stroke="#7c7c80" stroke-width="0.9"/><circle cx="736.4" cy="38.4" r="10.1" fill="#fff" fill-opacity="0.35" stroke="#7c7c80" stroke-width="0.9" clip-path="url(#cpVenn)"/></g><g><circle cx="779.5" cy="38.5" r="10.4" fill="#a1a1a1"/><circle cx="788.6" cy="47.3" r="10.4" fill="#a1a1a1"/><circle cx="779.5" cy="38.5" r="10.2" fill="none" stroke="#999" stroke-width="0.6"/><circle cx="788.6" cy="47.3" r="10.2" fill="none" stroke="#999" stroke-width="0.6"/></g><g><text x="821.9" y="41.6" font-family="Liberation Sans, sans-serif" font-weight="bold" font-size="11.2" fill="#6a6a6a" stroke="#6a6a6a" stroke-width="0.3" textLength="26" lengthAdjust="spacingAndGlyphs">ABC</text><path d="M820.6 45.2 q1 -1 2 0 t2 0 t2 0 t2 0 t2 0 t2 0 t2 0 t2 0" fill="none" stroke="#f0200e" stroke-width="1.1"/><circle cx="843.3" cy="47.3" r="8.2" fill="url(#gChk)" stroke="#e6f4e2" stroke-width="0.8"/><ellipse cx="843.3" cy="43.4" rx="6" ry="3.6" fill="#fff" opacity="0.25"/><path d="M838.6 46.6 L840.2 45 L842.6 47.8 L847.2 42.4 L848.8 43.8 L842.7 51.4z" fill="#fff"/></g></svg></div><div id="tbright"></div><div id="tbbot"></div><div id="blueline"></div>
<div id="grid">
<svg id="lines" width="945" height="971" viewBox="0 0 945 971" shape-rendering="crispEdges"><rect x="0" y="111" width="942" height="1" fill="#b5cfec"/><rect x="0" y="134" width="942" height="1" fill="#b5cfec"/><rect x="0" y="157" width="942" height="1" fill="#b5cfec"/><rect x="0" y="180" width="942" height="1" fill="#b5cfec"/><rect x="0" y="203" width="942" height="1" fill="#b5cfec"/><rect x="0" y="226" width="942" height="1" fill="#b5cfec"/><rect x="0" y="249" width="942" height="1" fill="#b5cfec"/><rect x="0" y="272" width="942" height="1" fill="#b5cfec"/><rect x="0" y="295" width="942" height="1" fill="#b5cfec"/><rect x="0" y="318" width="942" height="1" fill="#b5cfec"/><rect x="0" y="341" width="942" height="1" fill="#b5cfec"/><rect x="0" y="364" width="942" height="1" fill="#b5cfec"/><rect x="0" y="387" width="942" height="1" fill="#b5cfec"/><rect x="0" y="410" width="942" height="1" fill="#b5cfec"/><rect x="0" y="433" width="942" height="1" fill="#b5cfec"/><rect x="0" y="456" width="942" height="1" fill="#b5cfec"/><rect x="0" y="479" width="942" height="1" fill="#b5cfec"/><rect x="0" y="502" width="942" height="1" fill="#b5cfec"/><rect x="0" y="525" width="942" height="1" fill="#b5cfec"/><rect x="0" y="548" width="942" height="1" fill="#b5cfec"/><rect x="0" y="571" width="942" height="1" fill="#b5cfec"/><rect x="0" y="594" width="942" height="1" fill="#b5cfec"/><rect x="0" y="617" width="942" height="1" fill="#b5cfec"/><rect x="0" y="640" width="942" height="1" fill="#b5cfec"/><rect x="0" y="663" width="942" height="1" fill="#b5cfec"/><rect x="0" y="686" width="942" height="1" fill="#b5cfec"/><rect x="0" y="709" width="942" height="1" fill="#b5cfec"/><rect x="0" y="732" width="942" height="1" fill="#b5cfec"/><rect x="0" y="755" width="942" height="1" fill="#b5cfec"/><rect x="0" y="778" width="942" height="1" fill="#b5cfec"/><rect x="0" y="801" width="942" height="1" fill="#b5cfec"/><rect x="0" y="824" width="942" height="1" fill="#b5cfec"/><rect x="0" y="847" width="942" height="1" fill="#b5cfec"/><rect x="0" y="870" width="942" height="1" fill="#b5cfec"/><rect x="0" y="893" width="942" height="1" fill="#b5cfec"/><rect x="0" y="916" width="942" height="1" fill="#b5cfec"/><rect x="76" y="89" width="1" height="833" fill="#b5cfec"/><rect x="164" y="89" width="1" height="833" fill="#b5cfec"/><rect x="252" y="89" width="1" height="833" fill="#b5cfec"/><rect x="320" y="89" width="1" height="833" fill="#b5cfec"/><rect x="388" y="89" width="1" height="833" fill="#b5cfec"/><rect x="403" y="89" width="1" height="833" fill="#b5cfec"/><rect x="491" y="89" width="1" height="833" fill="#b5cfec"/><rect x="579" y="89" width="1" height="833" fill="#b5cfec"/><rect x="647" y="89" width="1" height="833" fill="#b5cfec"/><rect x="745" y="89" width="1" height="833" fill="#b5cfec"/><rect x="853" y="89" width="1" height="833" fill="#b5cfec"/><rect x="941" y="89" width="1" height="833" fill="#b5cfec"/><rect x="942" y="65" width="3" height="24" fill="#d0e3fa"/><rect x="942" y="89" width="3" height="833" fill="#e3eefb"/><rect x="0" y="67" width="76" height="21" fill="#d0e3fa"/><rect x="76" y="66" width="1.15" height="23.2" fill="#5d6877"/><rect x="0" y="88" width="77" height="1.1" fill="#5d6877"/><rect x="77" y="66" width="87" height="22" fill="#8a99ae"/><rect x="78" y="67" width="85" height="20" fill="#fff"/><rect x="79" y="68" width="84" height="19" fill="#d0e3fa"/><rect x="165" y="66" width="87" height="22" fill="#8a99ae"/><rect x="166" y="67" width="85" height="20" fill="#fff"/><rect x="167" y="68" width="84" height="19" fill="#d0e3fa"/><rect x="253" y="66" width="67" height="22" fill="#8a99ae"/><rect x="254" y="67" width="65" height="20" fill="#fff"/><rect x="255" y="68" width="64" height="19" fill="#d0e3fa"/><rect x="321" y="66" width="67" height="22" fill="#8a99ae"/><rect x="322" y="67" width="65" height="20" fill="#fff"/><rect x="323" y="68" width="64" height="19" fill="#d0e3fa"/><rect x="389" y="66" width="14" height="22" fill="#8a99ae"/><rect x="390" y="67" width="12" height="20" fill="#fff"/><rect x="391" y="68" width="11" height="19" fill="#d0e3fa"/><rect x="404" y="66" width="87" height="22" fill="#8a99ae"/><rect x="405" y="67" width="85" height="20" fill="#fff"/><rect x="406" y="68" width="84" height="19" fill="#d0e3fa"/><rect x="492" y="66" width="87" height="22" fill="#8a99ae"/><rect x="493" y="67" width="85" height="20" fill="#fff"/><rect x="494" y="68" width="84" height="19" fill="#d0e3fa"/><rect x="580" y="66" width="67" height="22" fill="#8a99ae"/><rect x="581" y="67" width="65" height="20" fill="#fff"/><rect x="582" y="68" width="64" height="19" fill="#d0e3fa"/><rect x="648" y="66" width="97" height="22" fill="#8a99ae"/><rect x="649" y="67" width="95" height="20" fill="#fff"/><rect x="650" y="68" width="94" height="19" fill="#d0e3fa"/><rect x="746" y="66" width="107" height="22" fill="#8a99ae"/><rect x="747" y="67" width="105" height="20" fill="#fff"/><rect x="748" y="68" width="104" height="19" fill="#d0e3fa"/><rect x="854" y="66" width="87" height="22" fill="#8a99ae"/><rect x="855" y="67" width="85" height="20" fill="#fff"/><rect x="856" y="68" width="84" height="19" fill="#d0e3fa"/><rect x="0" y="89" width="75" height="21" fill="#8a99ae"/><rect x="0" y="90" width="74" height="19" fill="#fff"/><rect x="0" y="91" width="74" height="18" fill="#d0e3fa"/><rect x="0" y="89" width="74" height="1" fill="#a9b5c6"/><rect x="0" y="112" width="75" height="21" fill="#8a99ae"/><rect x="0" y="113" width="74" height="19" fill="#fff"/><rect x="0" y="114" width="74" height="18" fill="#d0e3fa"/><rect x="0" y="135" width="75" height="21" fill="#8a99ae"/><rect x="0" y="136" width="74" height="19" fill="#fff"/><rect x="0" y="137" width="74" height="18" fill="#d0e3fa"/><rect x="0" y="158" width="75" height="21" fill="#8a99ae"/><rect x="0" y="159" width="74" height="19" fill="#fff"/><rect x="0" y="160" width="74" height="18" fill="#d0e3fa"/><rect x="0" y="181" width="75" height="21" fill="#8a99ae"/><rect x="0" y="182" width="74" height="19" fill="#fff"/><rect x="0" y="183" width="74" height="18" fill="#d0e3fa"/><rect x="0" y="204" width="75" height="21" fill="#8a99ae"/><rect x="0" y="205" width="74" height="19" fill="#fff"/><rect x="0" y="206" width="74" height="18" fill="#d0e3fa"/><rect x="0" y="227" width="75" height="21" fill="#8a99ae"/><rect x="0" y="228" width="74" height="19" fill="#fff"/><rect x="0" y="229" width="74" height="18" fill="#d0e3fa"/><rect x="0" y="250" width="75" height="21" fill="#8a99ae"/><rect x="0" y="251" width="74" height="19" fill="#fff"/><rect x="0" y="252" width="74" height="18" fill="#d0e3fa"/><rect x="0" y="273" width="75" height="21" fill="#8a99ae"/><rect x="0" y="274" width="74" height="19" fill="#fff"/><rect x="0" y="275" width="74" height="18" fill="#d0e3fa"/><rect x="0" y="296" width="75" height="21" fill="#8a99ae"/><rect x="0" y="297" width="74" height="19" fill="#fff"/><rect x="0" y="298" width="74" height="18" fill="#d0e3fa"/><rect x="0" y="319" width="75" height="21" fill="#8a99ae"/><rect x="0" y="320" width="74" height="19" fill="#fff"/><rect x="0" y="321" width="74" height="18" fill="#d0e3fa"/><rect x="0" y="342" width="75" height="21" fill="#8a99ae"/><rect x="0" y="343" width="74" height="19" fill="#fff"/><rect x="0" y="344" width="74" height="18" fill="#d0e3fa"/><rect x="0" y="365" width="75" height="21" fill="#8a99ae"/><rect x="0" y="366" width="74" height="19" fill="#fff"/><rect x="0" y="367" width="74" height="18" fill="#d0e3fa"/><rect x="0" y="388" width="75" height="21" fill="#8a99ae"/><rect x="0" y="389" width="74" height="19" fill="#fff"/><rect x="0" y="390" width="74" height="18" fill="#d0e3fa"/><rect x="0" y="411" width="75" height="21" fill="#8a99ae"/><rect x="0" y="412" width="74" height="19" fill="#fff"/><rect x="0" y="413" width="74" height="18" fill="#d0e3fa"/><rect x="0" y="434" width="75" height="21" fill="#8a99ae"/><rect x="0" y="435" width="74" height="19" fill="#fff"/><rect x="0" y="436" width="74" height="18" fill="#d0e3fa"/><rect x="0" y="457" width="75" height="21" fill="#8a99ae"/><rect x="0" y="458" width="74" height="19" fill="#fff"/><rect x="0" y="459" width="74" height="18" fill="#d0e3fa"/><rect x="0" y="480" width="75" height="21" fill="#8a99ae"/><rect x="0" y="481" width="74" height="19" fill="#fff"/><rect x="0" y="482" width="74" height="18" fill="#d0e3fa"/><rect x="0" y="503" width="75" height="21" fill="#8a99ae"/><rect x="0" y="504" width="74" height="19" fill="#fff"/><rect x="0" y="505" width="74" height="18" fill="#d0e3fa"/><rect x="0" y="526" width="75" height="21" fill="#8a99ae"/><rect x="0" y="527" width="74" height="19" fill="#fff"/><rect x="0" y="528" width="74" height="18" fill="#d0e3fa"/><rect x="0" y="549" width="75" height="21" fill="#8a99ae"/><rect x="0" y="550" width="74" height="19" fill="#fff"/><rect x="0" y="551" width="74" height="18" fill="#d0e3fa"/><rect x="0" y="572" width="75" height="21" fill="#8a99ae"/><rect x="0" y="573" width="74" height="19" fill="#fff"/><rect x="0" y="574" width="74" height="18" fill="#d0e3fa"/><rect x="0" y="595" width="75" height="21" fill="#8a99ae"/><rect x="0" y="596" width="74" height="19" fill="#fff"/><rect x="0" y="597" width="74" height="18" fill="#d0e3fa"/><rect x="0" y="618" width="75" height="21" fill="#8a99ae"/><rect x="0" y="619" width="74" height="19" fill="#fff"/><rect x="0" y="620" width="74" height="18" fill="#d0e3fa"/><rect x="0" y="641" width="75" height="21" fill="#8a99ae"/><rect x="0" y="642" width="74" height="19" fill="#fff"/><rect x="0" y="643" width="74" height="18" fill="#d0e3fa"/><rect x="0" y="664" width="75" height="21" fill="#8a99ae"/><rect x="0" y="665" width="74" height="19" fill="#fff"/><rect x="0" y="666" width="74" height="18" fill="#d0e3fa"/><rect x="0" y="687" width="75" height="21" fill="#8a99ae"/><rect x="0" y="688" width="74" height="19" fill="#fff"/><rect x="0" y="689" width="74" height="18" fill="#d0e3fa"/><rect x="0" y="710" width="75" height="21" fill="#8a99ae"/><rect x="0" y="711" width="74" height="19" fill="#fff"/><rect x="0" y="712" width="74" height="18" fill="#d0e3fa"/><rect x="0" y="733" width="75" height="21" fill="#8a99ae"/><rect x="0" y="734" width="74" height="19" fill="#fff"/><rect x="0" y="735" width="74" height="18" fill="#d0e3fa"/><rect x="0" y="756" width="75" height="21" fill="#8a99ae"/><rect x="0" y="757" width="74" height="19" fill="#fff"/><rect x="0" y="758" width="74" height="18" fill="#d0e3fa"/><rect x="0" y="779" width="75" height="21" fill="#8a99ae"/><rect x="0" y="780" width="74" height="19" fill="#fff"/><rect x="0" y="781" width="74" height="18" fill="#d0e3fa"/><rect x="0" y="802" width="75" height="21" fill="#8a99ae"/><rect x="0" y="803" width="74" height="19" fill="#fff"/><rect x="0" y="804" width="74" height="18" fill="#d0e3fa"/><rect x="0" y="825" width="75" height="21" fill="#8a99ae"/><rect x="0" y="826" width="74" height="19" fill="#fff"/><rect x="0" y="827" width="74" height="18" fill="#d0e3fa"/><rect x="0" y="848" width="75" height="21" fill="#8a99ae"/><rect x="0" y="849" width="74" height="19" fill="#fff"/><rect x="0" y="850" width="74" height="18" fill="#d0e3fa"/><rect x="0" y="871" width="75" height="21" fill="#8a99ae"/><rect x="0" y="872" width="74" height="19" fill="#fff"/><rect x="0" y="873" width="74" height="18" fill="#d0e3fa"/><rect x="0" y="894" width="75" height="21" fill="#8a99ae"/><rect x="0" y="895" width="74" height="19" fill="#fff"/><rect x="0" y="896" width="74" height="18" fill="#d0e3fa"/><rect x="0" y="917" width="75" height="5" fill="#8a99ae"/><rect x="0" y="918" width="74" height="4" fill="#fff"/><rect x="0" y="919" width="74" height="3" fill="#d0e3fa"/></svg>
<div class="hc" style="left:77.5px;width:86.0px">이름</div>
<div class="hc" style="left:165.5px;width:86.0px">유형</div>
<div class="hc" style="left:253.5px;width:66.0px">너비</div>
<div class="hc hl" style="left:321.5px;width:66.0px">소수점이<span>...</span></div>
<div class="hc hl" style="left:389.5px;width:13.0px"><span>...</span></div>
<div class="hc" style="left:404.5px;width:86.0px">값</div>
<div class="hc" style="left:492.5px;width:86.0px">결측값</div>
<div class="hc" style="left:580.5px;width:66.0px">열</div>
<div class="hc" style="left:648.5px;width:96.0px">맞춤</div>
<div class="hc" style="left:746.5px;width:106.0px">측도</div>
<div class="hc" style="left:854.5px;width:86.0px">역할</div>
<div class="row" style="top:88.0px">
<span class="rn">1</span>
<span class="c" style="left:79.1px">V1</span>
<span class="c" style="left:167.1px">숫자</span>
<span class="c" style="left:255.1px">1</span>
<span class="c" style="left:323.1px">0</span>
<span class="c" style="left:406.1px">없음</span>
<span class="c" style="left:494.1px">없음</span>
<span class="c" style="left:582.1px">8</span>
<span class="c" style="left:650.0px"><svg class="ic" width="16" height="16" style="left:0;top:4px"><use href="#i-align"/></svg><span style="position:absolute;left:20.2px">오른쪽</span></span>
<span class="c" style="left:748.0px"><svg class="ic" width="16" height="16" style="left:0;top:4px"><use href="#i-nominal"/></svg><span style="position:absolute;left:20.1px;white-space:nowrap">명목<span>(N)</span></span></span>
<span class="c" style="left:856.0px"><svg class="ic" width="16" height="16" style="left:0;top:4px"><use href="#i-role"/></svg><span style="position:absolute;left:20.1px">입력</span></span>
</div>
<div class="row" style="top:111.0px">
<span class="rn">2</span>
<span class="c" style="left:79.1px">V2</span>
<span class="c" style="left:167.1px">숫자</span>
<span class="c" style="left:255.1px">1</span>
<span class="c" style="left:323.1px">0</span>
<span class="c" style="left:406.1px">없음</span>
<span class="c" style="left:494.1px">없음</span>
<span class="c" style="left:582.1px">8</span>
<span class="c" style="left:650.0px"><svg class="ic" width="16" height="16" style="left:0;top:4px"><use href="#i-align"/></svg><span style="position:absolute;left:20.2px">오른쪽</span></span>
<span class="c" style="left:748.0px"><svg class="ic" width="16" height="16" style="left:0;top:4px"><use href="#i-nominal"/></svg><span style="position:absolute;left:20.1px;white-space:nowrap">명목<span>(N)</span></span></span>
<span class="c" style="left:856.0px"><svg class="ic" width="16" height="16" style="left:0;top:4px"><use href="#i-role"/></svg><span style="position:absolute;left:20.1px">입력</span></span>
</div>
<div class="row" style="top:134.0px">
<span class="rn">3</span>
<span class="c" style="left:79.1px">V3</span>
<span class="c" style="left:167.1px">숫자</span>
<span class="c" style="left:255.1px">1</span>
<span class="c" style="left:323.1px">0</span>
<span class="c" style="left:406.1px">없음</span>
<span class="c" style="left:494.1px">없음</span>
<span class="c" style="left:582.1px">8</span>
<span class="c" style="left:650.0px"><svg class="ic" width="16" height="16" style="left:0;top:4px"><use href="#i-align"/></svg><span style="position:absolute;left:20.2px">오른쪽</span></span>
<span class="c" style="left:748.0px"><svg class="ic" width="16" height="16" style="left:0;top:4px"><use href="#i-nominal"/></svg><span style="position:absolute;left:20.1px;white-space:nowrap">명목<span>(N)</span></span></span>
<span class="c" style="left:856.0px"><svg class="ic" width="16" height="16" style="left:0;top:4px"><use href="#i-role"/></svg><span style="position:absolute;left:20.1px">입력</span></span>
</div>
<div class="row" style="top:157.0px">
<span class="rn">4</span>
<span class="c" style="left:79.1px">V4</span>
<span class="c" style="left:167.1px">숫자</span>
<span class="c" style="left:255.1px">6</span>
<span class="c" style="left:323.1px">0</span>
<span class="c" style="left:406.1px">없음</span>
<span class="c" style="left:494.1px">없음</span>
<span class="c" style="left:582.1px">8</span>
<span class="c" style="left:650.0px"><svg class="ic" width="16" height="16" style="left:0;top:4px"><use href="#i-align"/></svg><span style="position:absolute;left:20.2px">오른쪽</span></span>
<span class="c" style="left:748.0px"><svg class="ic" width="16" height="16" style="left:0;top:4px"><use href="#i-scale"/></svg><span style="position:absolute;left:20.1px;white-space:nowrap">척도<span>(S)</span></span></span>
<span class="c" style="left:856.0px"><svg class="ic" width="16" height="16" style="left:0;top:4px"><use href="#i-role"/></svg><span style="position:absolute;left:20.1px">입력</span></span>
</div>
<div class="row" style="top:180.0px">
<span class="rn">5</span>
<span class="c" style="left:79.1px">V5</span>
<span class="c" style="left:167.1px">숫자</span>
<span class="c" style="left:255.1px">1</span>
<span class="c" style="left:323.1px">0</span>
<span class="c" style="left:406.1px">없음</span>
<span class="c" style="left:494.1px">없음</span>
<span class="c" style="left:582.1px">8</span>
<span class="c" style="left:650.0px"><svg class="ic" width="16" height="16" style="left:0;top:4px"><use href="#i-align"/></svg><span style="position:absolute;left:20.2px">오른쪽</span></span>
<span class="c" style="left:748.0px"><svg class="ic" width="16" height="16" style="left:0;top:4px"><use href="#i-nominal"/></svg><span style="position:absolute;left:20.1px;white-space:nowrap">명목<span>(N)</span></span></span>
<span class="c" style="left:856.0px"><svg class="ic" width="16" height="16" style="left:0;top:4px"><use href="#i-role"/></svg><span style="position:absolute;left:20.1px">입력</span></span>
</div>
<div class="row" style="top:203.0px">
<span class="rn">6</span>
<span class="c" style="left:79.1px">V6</span>
<span class="c" style="left:167.1px">숫자</span>
<span class="c" style="left:255.1px">1</span>
<span class="c" style="left:323.1px">0</span>
<span class="c" style="left:406.1px">없음</span>
<span class="c" style="left:494.1px">없음</span>
<span class="c" style="left:582.1px">8</span>
<span class="c" style="left:650.0px"><svg class="ic" width="16" height="16" style="left:0;top:4px"><use href="#i-align"/></svg><span style="position:absolute;left:20.2px">오른쪽</span></span>
<span class="c" style="left:748.0px"><svg class="ic" width="16" height="16" style="left:0;top:4px"><use href="#i-nominal"/></svg><span style="position:absolute;left:20.1px;white-space:nowrap">명목<span>(N)</span></span></span>
<span class="c" style="left:856.0px"><svg class="ic" width="16" height="16" style="left:0;top:4px"><use href="#i-role"/></svg><span style="position:absolute;left:20.1px">입력</span></span>
</div>
<div class="row" style="top:226.0px">
<span class="rn">7</span>
<span class="c" style="left:79.1px">V7</span>
<span class="c" style="left:167.1px">숫자</span>
<span class="c" style="left:255.1px">1</span>
<span class="c" style="left:323.1px">0</span>
<span class="c" style="left:406.1px">없음</span>
<span class="c" style="left:494.1px">없음</span>
<span class="c" style="left:582.1px">8</span>
<span class="c" style="left:650.0px"><svg class="ic" width="16" height="16" style="left:0;top:4px"><use href="#i-align"/></svg><span style="position:absolute;left:20.2px">오른쪽</span></span>
<span class="c" style="left:748.0px"><svg class="ic" width="16" height="16" style="left:0;top:4px"><use href="#i-nominal"/></svg><span style="position:absolute;left:20.1px;white-space:nowrap">명목<span>(N)</span></span></span>
<span class="c" style="left:856.0px"><svg class="ic" width="16" height="16" style="left:0;top:4px"><use href="#i-role"/></svg><span style="position:absolute;left:20.1px">입력</span></span>
</div>
<div class="row" style="top:249.0px">
<span class="rn">8</span>
<span class="c" style="left:79.1px">V8</span>
<span class="c" style="left:167.1px">숫자</span>
<span class="c" style="left:255.1px">4</span>
<span class="c" style="left:323.1px">0</span>
<span class="c" style="left:406.1px">없음</span>
<span class="c" style="left:494.1px">없음</span>
<span class="c" style="left:582.1px">8</span>
<span class="c" style="left:650.0px"><svg class="ic" width="16" height="16" style="left:0;top:4px"><use href="#i-align"/></svg><span style="position:absolute;left:20.2px">오른쪽</span></span>
<span class="c" style="left:748.0px"><svg class="ic" width="16" height="16" style="left:0;top:4px"><use href="#i-nominal"/></svg><span style="position:absolute;left:20.1px;white-space:nowrap">명목<span>(N)</span></span></span>
<span class="c" style="left:856.0px"><svg class="ic" width="16" height="16" style="left:0;top:4px"><use href="#i-role"/></svg><span style="position:absolute;left:20.1px">입력</span></span>
</div>
<div class="row" style="top:272.0px">
<span class="rn">9</span>
<span class="c" style="left:79.1px">V9</span>
<span class="c" style="left:167.1px">숫자</span>
<span class="c" style="left:255.1px">1</span>
<span class="c" style="left:323.1px">0</span>
<span class="c" style="left:406.1px">없음</span>
<span class="c" style="left:494.1px">없음</span>
<span class="c" style="left:582.1px">8</span>
<span class="c" style="left:650.0px"><svg class="ic" width="16" height="16" style="left:0;top:4px"><use href="#i-align"/></svg><span style="position:absolute;left:20.2px">오른쪽</span></span>
<span class="c" style="left:748.0px"><svg class="ic" width="16" height="16" style="left:0;top:4px"><use href="#i-nominal"/></svg><span style="position:absolute;left:20.1px;white-space:nowrap">명목<span>(N)</span></span></span>
<span class="c" style="left:856.0px"><svg class="ic" width="16" height="16" style="left:0;top:4px"><use href="#i-role"/></svg><span style="position:absolute;left:20.1px">입력</span></span>
</div>
<div class="row" style="top:295.0px">
<span class="rn">10</span>
<span class="c" style="left:79.1px">V10</span>
<span class="c" style="left:167.1px">숫자</span>
<span class="c" style="left:255.1px">2</span>
<span class="c" style="left:323.1px">0</span>
<span class="c" style="left:406.1px">없음</span>
<span class="c" style="left:494.1px">없음</span>
<span class="c" style="left:582.1px">8</span>
<span class="c" style="left:650.0px"><svg class="ic" width="16" height="16" style="left:0;top:4px"><use href="#i-align"/></svg><span style="position:absolute;left:20.2px">오른쪽</span></span>
<span class="c" style="left:748.0px"><svg class="ic" width="16" height="16" style="left:0;top:4px"><use href="#i-nominal"/></svg><span style="position:absolute;left:20.1px;white-space:nowrap">명목<span>(N)</span></span></span>
<span class="c" style="left:856.0px"><svg class="ic" width="16" height="16" style="left:0;top:4px"><use href="#i-role"/></svg><span style="position:absolute;left:20.1px">입력</span></span>
</div>
<div class="row" style="top:318.0px">
<span class="rn">11</span>
<span class="c" style="left:79.1px">V11</span>
<span class="c" style="left:167.1px">숫자</span>
<span class="c" style="left:255.1px">1</span>
<span class="c" style="left:323.1px">0</span>
<span class="c" style="left:406.1px">없음</span>
<span class="c" style="left:494.1px">없음</span>
<span class="c" style="left:582.1px">8</span>
<span class="c" style="left:650.0px"><svg class="ic" width="16" height="16" style="left:0;top:4px"><use href="#i-align"/></svg><span style="position:absolute;left:20.2px">오른쪽</span></span>
<span class="c" style="left:748.0px"><svg class="ic" width="16" height="16" style="left:0;top:4px"><use href="#i-nominal"/></svg><span style="position:absolute;left:20.1px;white-space:nowrap">명목<span>(N)</span></span></span>
<span class="c" style="left:856.0px"><svg class="ic" width="16" height="16" style="left:0;top:4px"><use href="#i-role"/></svg><span style="position:absolute;left:20.1px">입력</span></span>
</div>
<div class="row" style="top:341.0px">
<span class="rn">12</span>
<span class="c" style="left:79.1px">V12</span>
<span class="c" style="left:167.1px">숫자</span>
<span class="c" style="left:255.1px">2</span>
<span class="c" style="left:323.1px">0</span>
<span class="c" style="left:406.1px">없음</span>
<span class="c" style="left:494.1px">없음</span>
<span class="c" style="left:582.1px">8</span>
<span class="c" style="left:650.0px"><svg class="ic" width="16" height="16" style="left:0;top:4px"><use href="#i-align"/></svg><span style="position:absolute;left:20.2px">오른쪽</span></span>
<span class="c" style="left:748.0px"><svg class="ic" width="16" height="16" style="left:0;top:4px"><use href="#i-nominal"/></svg><span style="position:absolute;left:20.1px;white-space:nowrap">명목<span>(N)</span></span></span>
<span class="c" style="left:856.0px"><svg class="ic" width="16" height="16" style="left:0;top:4px"><use href="#i-role"/></svg><span style="position:absolute;left:20.1px">입력</span></span>
</div>
<div class="row" style="top:364.0px">
<span class="rn">13</span>
<span class="c" style="left:79.1px">V13</span>
<span class="c" style="left:167.1px">숫자</span>
<span class="c" style="left:255.1px">1</span>
<span class="c" style="left:323.1px">0</span>
<span class="c" style="left:406.1px">없음</span>
<span class="c" style="left:494.1px">없음</span>
<span class="c" style="left:582.1px">8</span>
<span class="c" style="left:650.0px"><svg class="ic" width="16" height="16" style="left:0;top:4px"><use href="#i-align"/></svg><span style="position:absolute;left:20.2px">오른쪽</span></span>
<span class="c" style="left:748.0px"><svg class="ic" width="16" height="16" style="left:0;top:4px"><use href="#i-nominal"/></svg><span style="position:absolute;left:20.1px;white-space:nowrap">명목<span>(N)</span></span></span>
<span class="c" style="left:856.0px"><svg class="ic" width="16" height="16" style="left:0;top:4px"><use href="#i-role"/></svg><span style="position:absolute;left:20.1px">입력</span></span>
</div>
<div class="row" style="top:387.0px">
<span class="rn">14</span>
<span class="c" style="left:79.1px">V14</span>
<span class="c" style="left:167.1px">숫자</span>
<span class="c" style="left:255.1px">1</span>
<span class="c" style="left:323.1px">0</span>
<span class="c" style="left:406.1px">없음</span>
<span class="c" style="left:494.1px">없음</span>
<span class="c" style="left:582.1px">8</span>
<span class="c" style="left:650.0px"><svg class="ic" width="16" height="16" style="left:0;top:4px"><use href="#i-align"/></svg><span style="position:absolute;left:20.2px">오른쪽</span></span>
<span class="c" style="left:748.0px"><svg class="ic" width="16" height="16" style="left:0;top:4px"><use href="#i-nominal"/></svg><span style="position:absolute;left:20.1px;white-space:nowrap">명목<span>(N)</span></span></span>
<span class="c" style="left:856.0px"><svg class="ic" width="16" height="16" style="left:0;top:4px"><use href="#i-role"/></svg><span style="position:absolute;left:20.1px">입력</span></span>
</div>
<div class="row" style="top:410.0px">
<span class="rn">15</span>
<span class="c" style="left:79.1px">V15</span>
<span class="c" style="left:167.1px">숫자</span>
<span class="c" style="left:255.1px">1</span>
<span class="c" style="left:323.1px">0</span>
<span class="c" style="left:406.1px">없음</span>
<span class="c" style="left:494.1px">없음</span>
<span class="c" style="left:582.1px">8</span>
<span class="c" style="left:650.0px"><svg class="ic" width="16" height="16" style="left:0;top:4px"><use href="#i-align"/></svg><span style="position:absolute;left:20.2px">오른쪽</span></span>
<span class="c" style="left:748.0px"><svg class="ic" width="16" height="16" style="left:0;top:4px"><use href="#i-nominal"/></svg><span style="position:absolute;left:20.1px;white-space:nowrap">명목<span>(N)</span></span></span>
<span class="c" style="left:856.0px"><svg class="ic" width="16" height="16" style="left:0;top:4px"><use href="#i-role"/></svg><span style="position:absolute;left:20.1px">입력</span></span>
</div>
<div class="row" style="top:433.0px">
<span class="rn">16</span>
<span class="c" style="left:79.1px">V16</span>
<span class="c" style="left:167.1px">숫자</span>
<span class="c" style="left:255.1px">3</span>
<span class="c" style="left:323.1px">0</span>
<span class="c" style="left:406.1px">없음</span>
<span class="c" style="left:494.1px">없음</span>
<span class="c" style="left:582.1px">8</span>
<span class="c" style="left:650.0px"><svg class="ic" width="16" height="16" style="left:0;top:4px"><use href="#i-align"/></svg><span style="position:absolute;left:20.2px">오른쪽</span></span>
<span class="c" style="left:748.0px"><svg class="ic" width="16" height="16" style="left:0;top:4px"><use href="#i-scale"/></svg><span style="position:absolute;left:20.1px;white-space:nowrap">척도<span>(S)</span></span></span>
<span class="c" style="left:856.0px"><svg class="ic" width="16" height="16" style="left:0;top:4px"><use href="#i-role"/></svg><span style="position:absolute;left:20.1px">입력</span></span>
</div>
<div class="row" style="top:456.0px">
<span class="rn">17</span>
<span class="c" style="left:79.1px">V17</span>
<span class="c" style="left:167.1px">숫자</span>
<span class="c" style="left:255.1px">3</span>
<span class="c" style="left:323.1px">0</span>
<span class="c" style="left:406.1px">없음</span>
<span class="c" style="left:494.1px">없음</span>
<span class="c" style="left:582.1px">8</span>
<span class="c" style="left:650.0px"><svg class="ic" width="16" height="16" style="left:0;top:4px"><use href="#i-align"/></svg><span style="position:absolute;left:20.2px">오른쪽</span></span>
<span class="c" style="left:748.0px"><svg class="ic" width="16" height="16" style="left:0;top:4px"><use href="#i-nominal"/></svg><span style="position:absolute;left:20.1px;white-space:nowrap">명목<span>(N)</span></span></span>
<span class="c" style="left:856.0px"><svg class="ic" width="16" height="16" style="left:0;top:4px"><use href="#i-role"/></svg><span style="position:absolute;left:20.1px">입력</span></span>
</div>
<div class="row" style="top:479.0px">
<span class="rn">18</span>
<span class="c" style="left:79.1px">V18_13</span>
<span class="c" style="left:167.1px">숫자</span>
<span class="c" style="left:255.1px">3</span>
<span class="c" style="left:323.1px">0</span>
<span class="c" style="left:406.1px">없음</span>
<span class="c" style="left:494.1px">없음</span>
<span class="c" style="left:582.1px">8</span>
<span class="c" style="left:650.0px"><svg class="ic" width="16" height="16" style="left:0;top:4px"><use href="#i-align"/></svg><span style="position:absolute;left:20.2px">오른쪽</span></span>
<span class="c" style="left:748.0px"><svg class="ic" width="16" height="16" style="left:0;top:4px"><use href="#i-scale"/></svg><span style="position:absolute;left:20.1px;white-space:nowrap">척도<span>(S)</span></span></span>
<span class="c" style="left:856.0px"><svg class="ic" width="16" height="16" style="left:0;top:4px"><use href="#i-role"/></svg><span style="position:absolute;left:20.1px">입력</span></span>
</div>
<div class="row" style="top:502.0px">
<span class="rn">19</span>
<span class="c" style="left:79.1px">V19</span>
<span class="c" style="left:167.1px">숫자</span>
<span class="c" style="left:255.1px">1</span>
<span class="c" style="left:323.1px">0</span>
<span class="c" style="left:406.1px">없음</span>
<span class="c" style="left:494.1px">없음</span>
<span class="c" style="left:582.1px">8</span>
<span class="c" style="left:650.0px"><svg class="ic" width="16" height="16" style="left:0;top:4px"><use href="#i-align"/></svg><span style="position:absolute;left:20.2px">오른쪽</span></span>
<span class="c" style="left:748.0px"><svg class="ic" width="16" height="16" style="left:0;top:4px"><use href="#i-nominal"/></svg><span style="position:absolute;left:20.1px;white-space:nowrap">명목<span>(N)</span></span></span>
<span class="c" style="left:856.0px"><svg class="ic" width="16" height="16" style="left:0;top:4px"><use href="#i-role"/></svg><span style="position:absolute;left:20.1px">입력</span></span>
</div>
<div class="row" style="top:525.0px">
<span class="rn">20</span>
<span class="c" style="left:79.1px">V20</span>
<span class="c" style="left:167.1px">숫자</span>
<span class="c" style="left:255.1px">2</span>
<span class="c" style="left:323.1px">0</span>
<span class="c" style="left:406.1px">없음</span>
<span class="c" style="left:494.1px">없음</span>
<span class="c" style="left:582.1px">8</span>
<span class="c" style="left:650.0px"><svg class="ic" width="16" height="16" style="left:0;top:4px"><use href="#i-align"/></svg><span style="position:absolute;left:20.2px">오른쪽</span></span>
<span class="c" style="left:748.0px"><svg class="ic" width="16" height="16" style="left:0;top:4px"><use href="#i-nominal"/></svg><span style="position:absolute;left:20.1px;white-space:nowrap">명목<span>(N)</span></span></span>
<span class="c" style="left:856.0px"><svg class="ic" width="16" height="16" style="left:0;top:4px"><use href="#i-role"/></svg><span style="position:absolute;left:20.1px">입력</span></span>
</div>
<div class="row" style="top:548.0px">
<span class="rn">21</span>
<span class="c" style="left:79.1px">V21_15</span>
<span class="c" style="left:167.1px">숫자</span>
<span class="c" style="left:255.1px">1</span>
<span class="c" style="left:323.1px">0</span>
<span class="c" style="left:406.1px">없음</span>
<span class="c" style="left:494.1px">없음</span>
<span class="c" style="left:582.1px">8</span>
<span class="c" style="left:650.0px"><svg class="ic" width="16" height="16" style="left:0;top:4px"><use href="#i-align"/></svg><span style="position:absolute;left:20.2px">오른쪽</span></span>
<span class="c" style="left:748.0px"><svg class="ic" width="16" height="16" style="left:0;top:4px"><use href="#i-nominal"/></svg><span style="position:absolute;left:20.1px;white-space:nowrap">명목<span>(N)</span></span></span>
<span class="c" style="left:856.0px"><svg class="ic" width="16" height="16" style="left:0;top:4px"><use href="#i-role"/></svg><span style="position:absolute;left:20.1px">입력</span></span>
</div>
<div class="row" style="top:571.0px">
<span class="rn">22</span>
<span class="c" style="left:79.1px">V22_16</span>
<span class="c" style="left:167.1px">숫자</span>
<span class="c" style="left:255.1px">1</span>
<span class="c" style="left:323.1px">0</span>
<span class="c" style="left:406.1px">없음</span>
<span class="c" style="left:494.1px">없음</span>
<span class="c" style="left:582.1px">8</span>
<span class="c" style="left:650.0px"><svg class="ic" width="16" height="16" style="left:0;top:4px"><use href="#i-align"/></svg><span style="position:absolute;left:20.2px">오른쪽</span></span>
<span class="c" style="left:748.0px"><svg class="ic" width="16" height="16" style="left:0;top:4px"><use href="#i-nominal"/></svg><span style="position:absolute;left:20.1px;white-space:nowrap">명목<span>(N)</span></span></span>
<span class="c" style="left:856.0px"><svg class="ic" width="16" height="16" style="left:0;top:4px"><use href="#i-role"/></svg><span style="position:absolute;left:20.1px">입력</span></span>
</div>
<div class="row" style="top:594.0px">
<span class="rn">23</span>
<span class="c" style="left:79.1px">V23_19_1_1</span>
<span class="c" style="left:167.1px">숫자</span>
<span class="c" style="left:255.1px">2</span>
<span class="c" style="left:323.1px">0</span>
<span class="c" style="left:406.1px">없음</span>
<span class="c" style="left:494.1px">없음</span>
<span class="c" style="left:582.1px">8</span>
<span class="c" style="left:650.0px"><svg class="ic" width="16" height="16" style="left:0;top:4px"><use href="#i-align"/></svg><span style="position:absolute;left:20.2px">오른쪽</span></span>
<span class="c" style="left:748.0px"><svg class="ic" width="16" height="16" style="left:0;top:4px"><use href="#i-nominal"/></svg><span style="position:absolute;left:20.1px;white-space:nowrap">명목<span>(N)</span></span></span>
<span class="c" style="left:856.0px"><svg class="ic" width="16" height="16" style="left:0;top:4px"><use href="#i-role"/></svg><span style="position:absolute;left:20.1px">입력</span></span>
</div>
<div class="row" style="top:617.0px">
<span class="rn">24</span>
<span class="c" style="left:79.1px">V24_19_1_2</span>
<span class="c" style="left:167.1px">숫자</span>
<span class="c" style="left:255.1px">2</span>
<span class="c" style="left:323.1px">0</span>
<span class="c" style="left:406.1px">없음</span>
<span class="c" style="left:494.1px">없음</span>
<span class="c" style="left:582.1px">8</span>
<span class="c" style="left:650.0px"><svg class="ic" width="16" height="16" style="left:0;top:4px"><use href="#i-align"/></svg><span style="position:absolute;left:20.2px">오른쪽</span></span>
<span class="c" style="left:748.0px"><svg class="ic" width="16" height="16" style="left:0;top:4px"><use href="#i-nominal"/></svg><span style="position:absolute;left:20.1px;white-space:nowrap">명목<span>(N)</span></span></span>
<span class="c" style="left:856.0px"><svg class="ic" width="16" height="16" style="left:0;top:4px"><use href="#i-role"/></svg><span style="position:absolute;left:20.1px">입력</span></span>
</div>
<div class="row" style="top:640.0px">
<span class="rn">25</span>
<span class="c" style="left:79.1px">V25_19_2_1</span>
<span class="c" style="left:167.1px">숫자</span>
<span class="c" style="left:255.1px">2</span>
<span class="c" style="left:323.1px">0</span>
<span class="c" style="left:406.1px">없음</span>
<span class="c" style="left:494.1px">없음</span>
<span class="c" style="left:582.1px">8</span>
<span class="c" style="left:650.0px"><svg class="ic" width="16" height="16" style="left:0;top:4px"><use href="#i-align"/></svg><span style="position:absolute;left:20.2px">오른쪽</span></span>
<span class="c" style="left:748.0px"><svg class="ic" width="16" height="16" style="left:0;top:4px"><use href="#i-nominal"/></svg><span style="position:absolute;left:20.1px;white-space:nowrap">명목<span>(N)</span></span></span>
<span class="c" style="left:856.0px"><svg class="ic" width="16" height="16" style="left:0;top:4px"><use href="#i-role"/></svg><span style="position:absolute;left:20.1px">입력</span></span>
</div>
<div class="row" style="top:663.0px">
<span class="rn">26</span>
<span class="c" style="left:79.1px">V26_19_2_2</span>
<span class="c" style="left:167.1px">숫자</span>
<span class="c" style="left:255.1px">2</span>
<span class="c" style="left:323.1px">0</span>
<span class="c" style="left:406.1px">없음</span>
<span class="c" style="left:494.1px">없음</span>
<span class="c" style="left:582.1px">8</span>
<span class="c" style="left:650.0px"><svg class="ic" width="16" height="16" style="left:0;top:4px"><use href="#i-align"/></svg><span style="position:absolute;left:20.2px">오른쪽</span></span>
<span class="c" style="left:748.0px"><svg class="ic" width="16" height="16" style="left:0;top:4px"><use href="#i-nominal"/></svg><span style="position:absolute;left:20.1px;white-space:nowrap">명목<span>(N)</span></span></span>
<span class="c" style="left:856.0px"><svg class="ic" width="16" height="16" style="left:0;top:4px"><use href="#i-role"/></svg><span style="position:absolute;left:20.1px">입력</span></span>
</div>
<div class="row" style="top:686.0px">
<span class="rn">27</span>
<span class="c" style="left:79.1px">V27</span>
<span class="c" style="left:167.1px">숫자</span>
<span class="c" style="left:255.1px">2</span>
<span class="c" style="left:323.1px">0</span>
<span class="c" style="left:406.1px">없음</span>
<span class="c" style="left:494.1px">없음</span>
<span class="c" style="left:582.1px">8</span>
<span class="c" style="left:650.0px"><svg class="ic" width="16" height="16" style="left:0;top:4px"><use href="#i-align"/></svg><span style="position:absolute;left:20.2px">오른쪽</span></span>
<span class="c" style="left:748.0px"><svg class="ic" width="16" height="16" style="left:0;top:4px"><use href="#i-nominal"/></svg><span style="position:absolute;left:20.1px;white-space:nowrap">명목<span>(N)</span></span></span>
<span class="c" style="left:856.0px"><svg class="ic" width="16" height="16" style="left:0;top:4px"><use href="#i-role"/></svg><span style="position:absolute;left:20.1px">입력</span></span>
</div>
<div class="row" style="top:709.0px">
<span class="rn">28</span>
<span class="c" style="left:79.1px">V28</span>
<span class="c" style="left:167.1px">숫자</span>
<span class="c" style="left:255.1px">1</span>
<span class="c" style="left:323.1px">0</span>
<span class="c" style="left:406.1px">없음</span>
<span class="c" style="left:494.1px">없음</span>
<span class="c" style="left:582.1px">8</span>
<span class="c" style="left:650.0px"><svg class="ic" width="16" height="16" style="left:0;top:4px"><use href="#i-align"/></svg><span style="position:absolute;left:20.2px">오른쪽</span></span>
<span class="c" style="left:748.0px"><svg class="ic" width="16" height="16" style="left:0;top:4px"><use href="#i-nominal"/></svg><span style="position:absolute;left:20.1px;white-space:nowrap">명목<span>(N)</span></span></span>
<span class="c" style="left:856.0px"><svg class="ic" width="16" height="16" style="left:0;top:4px"><use href="#i-role"/></svg><span style="position:absolute;left:20.1px">입력</span></span>
</div>
<div class="row" style="top:732.0px">
<span class="rn">29</span>
<span class="c" style="left:79.1px">V29</span>
<span class="c" style="left:167.1px">숫자</span>
<span class="c" style="left:255.1px">1</span>
<span class="c" style="left:323.1px">0</span>
<span class="c" style="left:406.1px">없음</span>
<span class="c" style="left:494.1px">없음</span>
<span class="c" style="left:582.1px">8</span>
<span class="c" style="left:650.0px"><svg class="ic" width="16" height="16" style="left:0;top:4px"><use href="#i-align"/></svg><span style="position:absolute;left:20.2px">오른쪽</span></span>
<span class="c" style="left:748.0px"><svg class="ic" width="16" height="16" style="left:0;top:4px"><use href="#i-nominal"/></svg><span style="position:absolute;left:20.1px;white-space:nowrap">명목<span>(N)</span></span></span>
<span class="c" style="left:856.0px"><svg class="ic" width="16" height="16" style="left:0;top:4px"><use href="#i-role"/></svg><span style="position:absolute;left:20.1px">입력</span></span>
</div>
<div class="row" style="top:755.0px">
<span class="rn">30</span>
<span class="c" style="left:79.1px">V30</span>
<span class="c" style="left:167.1px">숫자</span>
<span class="c" style="left:255.1px">1</span>
<span class="c" style="left:323.1px">0</span>
<span class="c" style="left:406.1px">없음</span>
<span class="c" style="left:494.1px">없음</span>
<span class="c" style="left:582.1px">8</span>
<span class="c" style="left:650.0px"><svg class="ic" width="16" height="16" style="left:0;top:4px"><use href="#i-align"/></svg><span style="position:absolute;left:20.2px">오른쪽</span></span>
<span class="c" style="left:748.0px"><svg class="ic" width="16" height="16" style="left:0;top:4px"><use href="#i-nominal"/></svg><span style="position:absolute;left:20.1px;white-space:nowrap">명목<span>(N)</span></span></span>
<span class="c" style="left:856.0px"><svg class="ic" width="16" height="16" style="left:0;top:4px"><use href="#i-role"/></svg><span style="position:absolute;left:20.1px">입력</span></span>
</div>
<div class="row" style="top:778.0px">
<span class="rn">31</span>
<span class="c" style="left:79.1px">V31</span>
<span class="c" style="left:167.1px">숫자</span>
<span class="c" style="left:255.1px">2</span>
<span class="c" style="left:323.1px">0</span>
<span class="c" style="left:406.1px">없음</span>
<span class="c" style="left:494.1px">없음</span>
<span class="c" style="left:582.1px">8</span>
<span class="c" style="left:650.0px"><svg class="ic" width="16" height="16" style="left:0;top:4px"><use href="#i-align"/></svg><span style="position:absolute;left:20.2px">오른쪽</span></span>
<span class="c" style="left:748.0px"><svg class="ic" width="16" height="16" style="left:0;top:4px"><use href="#i-nominal"/></svg><span style="position:absolute;left:20.1px;white-space:nowrap">명목<span>(N)</span></span></span>
<span class="c" style="left:856.0px"><svg class="ic" width="16" height="16" style="left:0;top:4px"><use href="#i-role"/></svg><span style="position:absolute;left:20.1px">입력</span></span>
</div>
<div class="row" style="top:801.0px">
<span class="rn">32</span>
<span class="c" style="left:79.1px">V32</span>
<span class="c" style="left:167.1px">숫자</span>
<span class="c" style="left:255.1px">1</span>
<span class="c" style="left:323.1px">0</span>
<span class="c" style="left:406.1px">없음</span>
<span class="c" style="left:494.1px">없음</span>
<span class="c" style="left:582.1px">8</span>
<span class="c" style="left:650.0px"><svg class="ic" width="16" height="16" style="left:0;top:4px"><use href="#i-align"/></svg><span style="position:absolute;left:20.2px">오른쪽</span></span>
<span class="c" style="left:748.0px"><svg class="ic" width="16" height="16" style="left:0;top:4px"><use href="#i-nominal"/></svg><span style="position:absolute;left:20.1px;white-space:nowrap">명목<span>(N)</span></span></span>
<span class="c" style="left:856.0px"><svg class="ic" width="16" height="16" style="left:0;top:4px"><use href="#i-role"/></svg><span style="position:absolute;left:20.1px">입력</span></span>
</div>
<div class="row" style="top:824.0px">
<span class="rn">33</span>
<span class="c" style="left:79.1px">V33</span>
<span class="c" style="left:167.1px">숫자</span>
<span class="c" style="left:255.1px">6</span>
<span class="c" style="left:323.1px">0</span>
<span class="c" style="left:406.1px">없음</span>
<span class="c" style="left:494.1px">없음</span>
<span class="c" style="left:582.1px">8</span>
<span class="c" style="left:650.0px"><svg class="ic" width="16" height="16" style="left:0;top:4px"><use href="#i-align"/></svg><span style="position:absolute;left:20.2px">오른쪽</span></span>
<span class="c" style="left:748.0px"><svg class="ic" width="16" height="16" style="left:0;top:4px"><use href="#i-scale"/></svg><span style="position:absolute;left:20.1px;white-space:nowrap">척도<span>(S)</span></span></span>
<span class="c" style="left:856.0px"><svg class="ic" width="16" height="16" style="left:0;top:4px"><use href="#i-role"/></svg><span style="position:absolute;left:20.1px">입력</span></span>
</div>
<div class="row" style="top:847.0px">
<span class="rn">34</span>
<span class="c" style="left:79.1px">V34</span>
<span class="c" style="left:167.1px">숫자</span>
<span class="c" style="left:255.1px">1</span>
<span class="c" style="left:323.1px">0</span>
<span class="c" style="left:406.1px">없음</span>
<span class="c" style="left:494.1px">없음</span>
<span class="c" style="left:582.1px">8</span>
<span class="c" style="left:650.0px"><svg class="ic" width="16" height="16" style="left:0;top:4px"><use href="#i-align"/></svg><span style="position:absolute;left:20.2px">오른쪽</span></span>
<span class="c" style="left:748.0px"><svg class="ic" width="16" height="16" style="left:0;top:4px"><use href="#i-nominal"/></svg><span style="position:absolute;left:20.1px;white-space:nowrap">명목<span>(N)</span></span></span>
<span class="c" style="left:856.0px"><svg class="ic" width="16" height="16" style="left:0;top:4px"><use href="#i-role"/></svg><span style="position:absolute;left:20.1px">입력</span></span>
</div>
<div class="row" style="top:870.0px">
<span class="rn">35</span>
<span class="c" style="left:79.1px">V35</span>
<span class="c" style="left:167.1px">숫자</span>
<span class="c" style="left:255.1px">6</span>
<span class="c" style="left:323.1px">0</span>
<span class="c" style="left:406.1px">없음</span>
<span class="c" style="left:494.1px">없음</span>
<span class="c" style="left:582.1px">8</span>
<span class="c" style="left:650.0px"><svg class="ic" width="16" height="16" style="left:0;top:4px"><use href="#i-align"/></svg><span style="position:absolute;left:20.2px">오른쪽</span></span>
<span class="c" style="left:748.0px"><svg class="ic" width="16" height="16" style="left:0;top:4px"><use href="#i-scale"/></svg><span style="position:absolute;left:20.1px;white-space:nowrap">척도<span>(S)</span></span></span>
<span class="c" style="left:856.0px"><svg class="ic" width="16" height="16" style="left:0;top:4px"><use href="#i-role"/></svg><span style="position:absolute;left:20.1px">입력</span></span>
</div>
<div class="row" style="top:893.0px">
<span class="rn">36</span>
<span class="c" style="left:79.1px">V36</span>
<span class="c" style="left:167.1px">숫자</span>
<span class="c" style="left:255.1px">2</span>
<span class="c" style="left:323.1px">0</span>
<span class="c" style="left:406.1px">없음</span>
<span class="c" style="left:494.1px">없음</span>
<span class="c" style="left:582.1px">8</span>
<span class="c" style="left:650.0px"><svg class="ic" width="16" height="16" style="left:0;top:4px"><use href="#i-align"/></svg><span style="position:absolute;left:20.2px">오른쪽</span></span>
<span class="c" style="left:748.0px"><svg class="ic" width="16" height="16" style="left:0;top:4px"><use href="#i-nominal"/></svg><span style="position:absolute;left:20.1px;white-space:nowrap">명목<span>(N)</span></span></span>
<span class="c" style="left:856.0px"><svg class="ic" width="16" height="16" style="left:0;top:4px"><use href="#i-role"/></svg><span style="position:absolute;left:20.1px">입력</span></span>
</div>
<div class="row" style="top:916px">
<span class="c" style="left:650.0px"><svg class="ic" width="16" height="16" style="left:0;top:4px"><use href="#i-align"/></svg></span>
<span class="c" style="left:748.0px"><svg class="ic" width="16" height="16" style="left:0;top:4px"><use href="#i-nominal"/></svg></span>
<span class="c" style="left:856.0px"><svg class="ic" width="16" height="16" style="left:0;top:4px"><use href="#i-role"/></svg></span>
</div>
</div>
<div id="hs"><div id="hsleft"></div><div id="hstrack"></div><div id="hsbtn"><svg width="15" height="14" viewBox="0 0 15 14"><defs><linearGradient id="gTri" x1="0" y1="0" x2="1" y2="0"><stop offset="0" stop-color="#3f3f3f"/><stop offset="1" stop-color="#a8a8a8"/></linearGradient></defs><path d="M10.1 2.7 L10.1 12 L4.9 7.35 Z" fill="url(#gTri)"/></svg></div></div>
<div id="tabline"></div>
<div id="tabs"><div id="tabgap"></div><div id="tab1">데이터 보기<span>(D)</span></div><div id="tab2">변수 보기<span>(V)</span></div></div>
</body></html>
